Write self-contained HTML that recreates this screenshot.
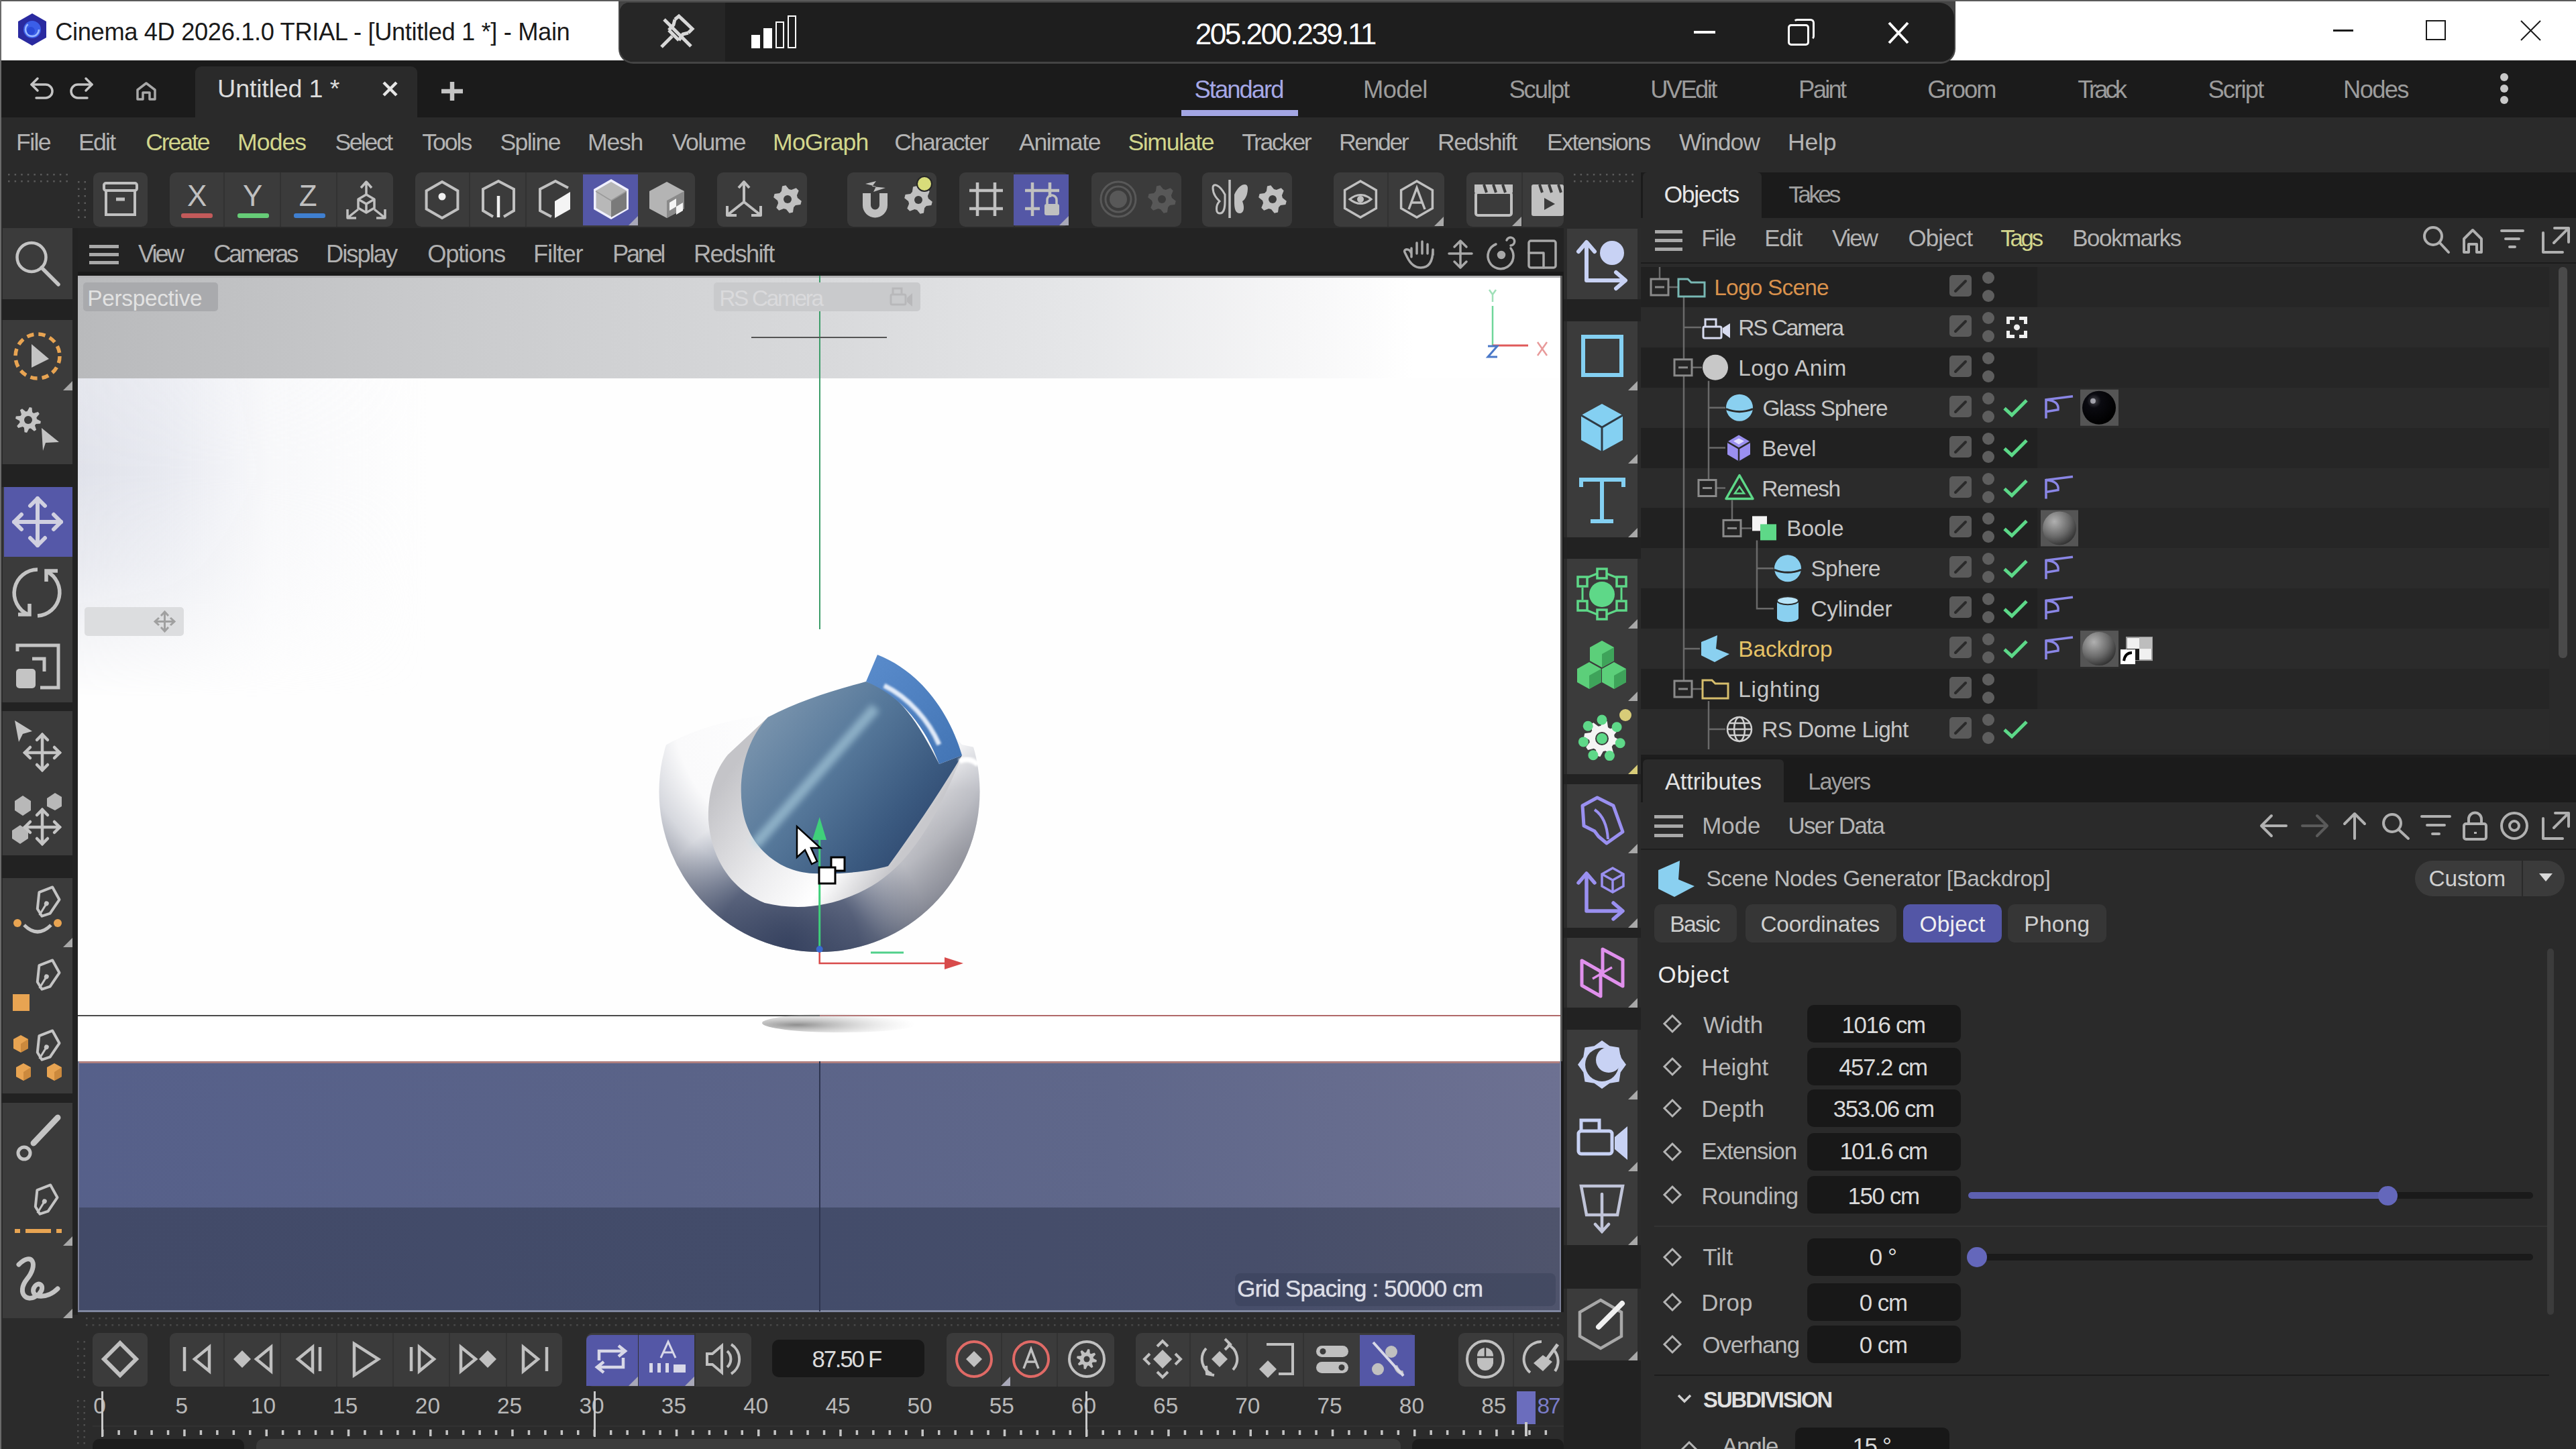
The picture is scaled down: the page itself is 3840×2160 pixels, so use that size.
<!DOCTYPE html><html><head><meta charset="utf-8"><style>
html,body{margin:0;padding:0;}
body{width:3840px;height:2160px;position:relative;overflow:hidden;background:#262626;font-family:"Liberation Sans",sans-serif;}
.t{position:absolute;white-space:nowrap;line-height:1;}
svg{overflow:visible}
</style></head><body>
<div style="position:absolute;left:0.0px;top:0.0px;width:3840.0px;height:90.0px;background:#ffffff;"></div>
<div style="position:absolute;left:0.0px;top:0.0px;width:3840.0px;height:2.0px;background:#5a5a5a;"></div>
<div style="position:absolute;left:0.0px;top:0.0px;width:2.0px;height:2160.0px;background:#6a6a6a;"></div>
<svg style="position:absolute;left:26.0px;top:19.0px;" width="44" height="50" viewBox="0 0 44 50"><polygon points="22,1 43,13 43,37 22,49 1,37 1,13" fill="#2a2aa0"/><circle cx="22" cy="25" r="13" fill="#3b5ee8"/><circle cx="22" cy="25" r="10" fill="none" stroke="#9bb8ff" stroke-width="2.5" stroke-dasharray="40 30"/><circle cx="20" cy="27" r="6" fill="#2a4ad8"/></svg>
<div class="t" style="left:82.2px;top:30px;font-size:36.34px;color:#1a1a1a;letter-spacing:-0.38px;">Cinema 4D 2026.1.0 TRIAL - [Untitled 1 *] - Main</div>
<div style="position:absolute;left:3478.0px;top:44.0px;width:30.0px;height:2.5px;background:#1a1a1a;"></div>
<div style="position:absolute;left:3616px;top:30px;width:26px;height:26px;border:2px solid #1a1a1a"></div>
<svg style="position:absolute;left:3757.0px;top:30.0px;" width="31" height="31" viewBox="0 0 31 31"><path d="M1 1 L30 30 M30 1 L1 30" stroke="#1a1a1a" stroke-width="2"/></svg>
<div style="position:absolute;left:922px;top:2px;width:1993px;height:93px;background:#444444;border-radius:0 0 22px 22px;z-index:5"></div>
<div style="position:absolute;left:924px;top:4px;width:1989px;height:88px;background:#1e1e1e;border-radius:14px 22px 20px 20px;overflow:hidden;z-index:5"><div style="position:absolute;left:0;top:0;width:157px;height:88px;background:#262626"></div></div>
<div style="position:absolute;left:0;top:0;width:0;height:0;z-index:6">
<svg style="position:absolute;left:984.0px;top:23.0px;" width="50" height="50" viewBox="0 0 50 50"><g fill="none" stroke="#d8d8d8" stroke-width="5"><path d="M22 6 L28 1 L48 20 L42 26 M13 22 L28 37 M2 47 L18 31 M6 6 L46 46"/><path d="M22 6 L20 14 L13 22 M42 26 L34 28 L28 37"/></g></svg>
<div style="position:absolute;left:1120.0px;top:52.0px;width:13.0px;height:20.0px;background:#ffffff;"></div>
<div style="position:absolute;left:1138.0px;top:42.0px;width:13.0px;height:30.0px;background:#ffffff;"></div>
<div style="position:absolute;left:1156px;top:32px;width:9px;height:36px;border:2px solid #fff"></div>
<div style="position:absolute;left:1174px;top:23px;width:9px;height:45px;border:2px solid #fff"></div>
<div class="t" style="left:1781.8px;top:29px;font-size:44.33px;color:#ffffff;letter-spacing:-2.64px;">205.200.239.11</div>
<div style="position:absolute;left:2525.0px;top:46.0px;width:32.0px;height:4.0px;background:#ffffff;"></div>
<div style="position:absolute;left:2673px;top:28px;width:26px;height:26px;border:3px solid #fff;border-radius:6px;border-left-color:transparent;border-bottom-color:transparent"></div>
<div style="position:absolute;left:2665px;top:36px;width:26px;height:26px;border:3px solid #fff;border-radius:5px;background:#1e1e1e"></div>
<svg style="position:absolute;left:2814.0px;top:32.0px;" width="32" height="34" viewBox="0 0 32 34"><path d="M2 2 L30 32 M30 2 L2 32" stroke="#fff" stroke-width="4"/></svg>
</div>
<div style="position:absolute;left:2.0px;top:90.0px;width:3838.0px;height:85.0px;background:#1b1b1b;"></div>
<svg style="position:absolute;left:44.0px;top:115.0px;" width="36" height="34" viewBox="0 0 36 34"><g fill="none" stroke="#c4c4c4" stroke-width="3.5" stroke-linecap="round" stroke-linejoin="round"><path d="M12 2 L3 11 L12 20"/><path d="M3 11 H24 A9.5 9.5 0 0 1 24 31 H10"/></g></svg>
<svg style="position:absolute;left:104.0px;top:115.0px;" width="36" height="34" viewBox="0 0 36 34"><g fill="none" stroke="#c4c4c4" stroke-width="3.5" stroke-linecap="round" stroke-linejoin="round"><path d="M24 2 L33 11 L24 20"/><path d="M33 11 H12 A9.5 9.5 0 0 0 12 31 H26"/></g></svg>
<svg style="position:absolute;left:203.0px;top:122.0px;" width="30" height="28" viewBox="0 0 30 28"><path d="M2 26 V12 L15 2 L28 12 V26 H20 V16 H10 V26 Z" fill="none" stroke="#a8a8a8" stroke-width="3.5" stroke-linejoin="round"/></svg>
<div style="position:absolute;left:291px;top:99px;width:331px;height:76px;background:#2a2a2a;border-radius:9px 9px 0 0"></div>
<div class="t" style="left:324.1px;top:114px;font-size:37.79px;color:#dcdcdc;letter-spacing:-0.23px;">Untitled 1 *</div>
<svg style="position:absolute;left:570.0px;top:121.0px;" width="23" height="23" viewBox="0 0 23 23"><path d="M2 2 L21 21 M21 2 L2 21" stroke="#e6e6e6" stroke-width="4.5"/></svg>
<svg style="position:absolute;left:658.0px;top:122.0px;" width="32" height="28" viewBox="0 0 32 28"><path d="M16 0 V28 M0 14 H32" stroke="#c4c4c4" stroke-width="6.5"/></svg>
<div class="t" style="left:1780.4px;top:116px;font-size:36.34px;color:#a6a8e6;letter-spacing:-1.91px;">Standard</div>
<div class="t" style="left:2032.1px;top:116px;font-size:36.34px;color:#9c9c9c;letter-spacing:-0.65px;">Model</div>
<div class="t" style="left:2249.4px;top:116px;font-size:36.34px;color:#9c9c9c;letter-spacing:-2.02px;">Sculpt</div>
<div class="t" style="left:2460.2px;top:116px;font-size:36.34px;color:#9c9c9c;letter-spacing:-2.60px;">UVEdit</div>
<div class="t" style="left:2681.1px;top:116px;font-size:36.34px;color:#9c9c9c;letter-spacing:-2.67px;">Paint</div>
<div class="t" style="left:2873.2px;top:116px;font-size:36.34px;color:#9c9c9c;letter-spacing:-1.95px;">Groom</div>
<div class="t" style="left:3097.2px;top:116px;font-size:36.34px;color:#9c9c9c;letter-spacing:-3.93px;">Track</div>
<div class="t" style="left:3291.4px;top:116px;font-size:36.34px;color:#9c9c9c;letter-spacing:-1.80px;">Script</div>
<div class="t" style="left:3493.1px;top:116px;font-size:36.34px;color:#9c9c9c;letter-spacing:-1.70px;">Nodes</div>
<div style="position:absolute;left:1761.0px;top:164.0px;width:174.0px;height:9.0px;background:#a3a6e3;"></div>
<div style="position:absolute;left:3727px;top:109px;width:12px;height:12px;border-radius:6px;background:#c8c8c8"></div>
<div style="position:absolute;left:3727px;top:126px;width:12px;height:12px;border-radius:6px;background:#c8c8c8"></div>
<div style="position:absolute;left:3727px;top:143px;width:12px;height:12px;border-radius:6px;background:#c8c8c8"></div>
<div style="position:absolute;left:2.0px;top:175.0px;width:3838.0px;height:68.0px;background:#2a2a2a;"></div>
<div class="t" style="left:24.1px;top:195px;font-size:35.61px;color:#b4b4b4;letter-spacing:-1.67px;">File</div>
<div class="t" style="left:117.1px;top:195px;font-size:35.61px;color:#b4b4b4;letter-spacing:-1.77px;">Edit</div>
<div class="t" style="left:217.2px;top:195px;font-size:35.61px;color:#d2d68c;letter-spacing:-2.12px;">Create</div>
<div class="t" style="left:354.1px;top:195px;font-size:35.61px;color:#d2d68c;letter-spacing:-0.95px;">Modes</div>
<div class="t" style="left:499.4px;top:195px;font-size:35.61px;color:#b4b4b4;letter-spacing:-2.44px;">Select</div>
<div class="t" style="left:629.2px;top:195px;font-size:35.61px;color:#b4b4b4;letter-spacing:-2.03px;">Tools</div>
<div class="t" style="left:745.4px;top:195px;font-size:35.61px;color:#b4b4b4;letter-spacing:-1.58px;">Spline</div>
<div class="t" style="left:876.1px;top:195px;font-size:35.61px;color:#b4b4b4;letter-spacing:-1.30px;">Mesh</div>
<div class="t" style="left:1001.9px;top:195px;font-size:35.61px;color:#b4b4b4;letter-spacing:-1.62px;">Volume</div>
<div class="t" style="left:1152.1px;top:195px;font-size:35.61px;color:#d2d68c;letter-spacing:-0.87px;">MoGraph</div>
<div class="t" style="left:1333.2px;top:195px;font-size:35.61px;color:#b4b4b4;letter-spacing:-1.86px;">Character</div>
<div class="t" style="left:1519.0px;top:195px;font-size:35.61px;color:#b4b4b4;letter-spacing:-1.35px;">Animate</div>
<div class="t" style="left:1681.4px;top:195px;font-size:35.61px;color:#d2d68c;letter-spacing:-1.34px;">Simulate</div>
<div class="t" style="left:1851.2px;top:195px;font-size:35.61px;color:#b4b4b4;letter-spacing:-2.50px;">Tracker</div>
<div class="t" style="left:1996.1px;top:195px;font-size:35.61px;color:#b4b4b4;letter-spacing:-2.46px;">Render</div>
<div class="t" style="left:2143.1px;top:195px;font-size:35.61px;color:#b4b4b4;letter-spacing:-1.64px;">Redshift</div>
<div class="t" style="left:2306.1px;top:195px;font-size:35.61px;color:#b4b4b4;letter-spacing:-2.11px;">Extensions</div>
<div class="t" style="left:2502.9px;top:195px;font-size:35.61px;color:#b4b4b4;letter-spacing:-1.12px;">Window</div>
<div class="t" style="left:2665.1px;top:195px;font-size:35.61px;color:#b4b4b4;letter-spacing:-0.30px;">Help</div>
<div style="position:absolute;left:2.0px;top:243.0px;width:2329.0px;height:97.0px;background:#2a2a2a;"></div>
<svg style="position:absolute;left:12.0px;top:259.0px;" width="96" height="14" viewBox="0 0 96 14"><rect x="0.0" y="0" width="2.5" height="2.5" fill="#5a5a5a"/><rect x="9.6" y="0" width="2.5" height="2.5" fill="#5a5a5a"/><rect x="19.2" y="0" width="2.5" height="2.5" fill="#5a5a5a"/><rect x="28.799999999999997" y="0" width="2.5" height="2.5" fill="#5a5a5a"/><rect x="38.4" y="0" width="2.5" height="2.5" fill="#5a5a5a"/><rect x="48.0" y="0" width="2.5" height="2.5" fill="#5a5a5a"/><rect x="57.599999999999994" y="0" width="2.5" height="2.5" fill="#5a5a5a"/><rect x="67.2" y="0" width="2.5" height="2.5" fill="#5a5a5a"/><rect x="76.8" y="0" width="2.5" height="2.5" fill="#5a5a5a"/><rect x="86.39999999999999" y="0" width="2.5" height="2.5" fill="#5a5a5a"/><rect x="0.0" y="10" width="2.5" height="2.5" fill="#5a5a5a"/><rect x="9.6" y="10" width="2.5" height="2.5" fill="#5a5a5a"/><rect x="19.2" y="10" width="2.5" height="2.5" fill="#5a5a5a"/><rect x="28.799999999999997" y="10" width="2.5" height="2.5" fill="#5a5a5a"/><rect x="38.4" y="10" width="2.5" height="2.5" fill="#5a5a5a"/><rect x="48.0" y="10" width="2.5" height="2.5" fill="#5a5a5a"/><rect x="57.599999999999994" y="10" width="2.5" height="2.5" fill="#5a5a5a"/><rect x="67.2" y="10" width="2.5" height="2.5" fill="#5a5a5a"/><rect x="76.8" y="10" width="2.5" height="2.5" fill="#5a5a5a"/><rect x="86.39999999999999" y="10" width="2.5" height="2.5" fill="#5a5a5a"/></svg>
<svg style="position:absolute;left:116.0px;top:270.0px;" width="14" height="60" viewBox="0 0 14 60"><rect x="0.0" y="0.0" width="2.5" height="2.5" fill="#5a5a5a"/><rect x="9.5" y="0.0" width="2.5" height="2.5" fill="#5a5a5a"/><rect x="0.0" y="10.5" width="2.5" height="2.5" fill="#5a5a5a"/><rect x="9.5" y="10.5" width="2.5" height="2.5" fill="#5a5a5a"/><rect x="0.0" y="21.0" width="2.5" height="2.5" fill="#5a5a5a"/><rect x="9.5" y="21.0" width="2.5" height="2.5" fill="#5a5a5a"/><rect x="0.0" y="31.5" width="2.5" height="2.5" fill="#5a5a5a"/><rect x="9.5" y="31.5" width="2.5" height="2.5" fill="#5a5a5a"/><rect x="0.0" y="42.0" width="2.5" height="2.5" fill="#5a5a5a"/><rect x="9.5" y="42.0" width="2.5" height="2.5" fill="#5a5a5a"/><rect x="0.0" y="52.5" width="2.5" height="2.5" fill="#5a5a5a"/><rect x="9.5" y="52.5" width="2.5" height="2.5" fill="#5a5a5a"/></svg>
<div style="position:absolute;left:139px;top:257px;width:81px;height:81px;background:#3b3b3b;border-radius:9px"></div>
<div style="position:absolute;left:253px;top:257px;width:333px;height:81px;background:#3b3b3b;border-radius:9px"></div>
<div style="position:absolute;left:619px;top:257px;width:417px;height:81px;background:#3b3b3b;border-radius:9px"></div>
<div style="position:absolute;left:1069px;top:257px;width:134px;height:81px;background:#3b3b3b;border-radius:9px"></div>
<div style="position:absolute;left:1263px;top:257px;width:133px;height:81px;background:#3b3b3b;border-radius:9px"></div>
<div style="position:absolute;left:1430px;top:257px;width:163px;height:81px;background:#3b3b3b;border-radius:9px"></div>
<div style="position:absolute;left:1627px;top:257px;width:134px;height:81px;background:#3b3b3b;border-radius:9px"></div>
<div style="position:absolute;left:1792px;top:257px;width:134px;height:81px;background:#3b3b3b;border-radius:9px"></div>
<div style="position:absolute;left:1988px;top:257px;width:165px;height:81px;background:#3b3b3b;border-radius:9px"></div>
<div style="position:absolute;left:2186px;top:257px;width:145px;height:81px;background:#3b3b3b;border-radius:9px"></div>
<div style="position:absolute;left:333.0px;top:257.0px;width:2.0px;height:81.0px;background:#323232;"></div>
<div style="position:absolute;left:417.0px;top:257.0px;width:2.0px;height:81.0px;background:#323232;"></div>
<div style="position:absolute;left:501.0px;top:257.0px;width:2.0px;height:81.0px;background:#323232;"></div>
<div style="position:absolute;left:699.0px;top:257.0px;width:2.0px;height:81.0px;background:#323232;"></div>
<div style="position:absolute;left:783.0px;top:257.0px;width:2.0px;height:81.0px;background:#323232;"></div>
<div style="position:absolute;left:1511.0px;top:257.0px;width:2.0px;height:81.0px;background:#323232;"></div>
<div style="position:absolute;left:2068.0px;top:257.0px;width:2.0px;height:81.0px;background:#323232;"></div>
<div style="position:absolute;left:2268.0px;top:257.0px;width:2.0px;height:81.0px;background:#323232;"></div>
<div style="position:absolute;left:869.0px;top:260.0px;width:82.0px;height:76.0px;background:#5457a6;"></div>
<svg style="position:absolute;left:937px;top:322px" width="14" height="14"><path d="M14 0 V14 H0 Z" fill="#a8a8b8"/></svg>
<div style="position:absolute;left:1511.0px;top:260.0px;width:82.0px;height:76.0px;background:#5457a6;"></div>
<svg style="position:absolute;left:1579px;top:322px" width="14" height="14"><path d="M14 0 V14 H0 Z" fill="#a8a8b8"/></svg>
<div style="position:absolute;left:2331px;top:243px;width:0px;height:0px"></div>
<svg style="position:absolute;left:0.0px;top:0.0px;" width="2331" height="340" viewBox="0 0 2331 340"><g fill="none" stroke="#c0c0c0" stroke-width="4"><rect x="155" y="273" width="49" height="11" rx="3"/><path d="M158 284 V320 H201 V284"/></g><path d="M173 297 H186" stroke="#c0c0c0" stroke-width="5"/><g stroke="#c0c0c0" stroke-width="3.5" fill="none" stroke-linejoin="round"><path d="M546 290 L558 297 V310 L546 317 L534 310 V297 Z M534 297 L546 304 L558 297 M546 304 V317"/><path d="M546 290 V272 M538 280 L546 271 L554 280"/><path d="M534 312 L519 324 M518 312 V325 H531 M558 312 L573 324 M574 312 V325 H561"/></g><polygon points="659.0,271.0 682.4,284.5 682.4,311.5 659.0,325.0 635.6,311.5 635.6,284.5" fill="none" stroke="#c0c0c0" stroke-width="4"/><circle cx="659" cy="293" r="5.5" fill="#f0f0f0"/><path d="M735 323 L720 314 V282 L743 270 L766 282 V314 L751 323" fill="none" stroke="#c0c0c0" stroke-width="4"/><path d="M743 292 V324" stroke="#f0f0f0" stroke-width="4.5"/><path d="M822 323 L805 314 V282 L828 270 L847 280" fill="none" stroke="#c0c0c0" stroke-width="4"/><path d="M827 300 L850 286 V312 L827 325 Z" fill="#f4f4f4"/><polygon points="911.0,269.0 935.2,283.0 935.2,311.0 911.0,325.0 886.8,311.0 886.8,283.0" fill="#b8b8b8" stroke="#f0f0ff" stroke-width="3.5"/><path d="M911 299 L934 285 V311 L911 324 Z" fill="#7a7a7a"/><path d="M888 285 L911 299 L934 285" stroke="#9a9a9a" stroke-width="1.5" fill="none"/><path d="M994 271 L1020 285 V311 L994 325 L968 311 V285 Z" fill="#b4b4b4"/><path d="M994 299 L1020 285 V311 L994 325 Z" fill="#8a8a8a"/><path d="M998 302 L1008 296 V308 L998 314 Z M1008 308 L1018 302 V314 L1008 320 Z" fill="#f4f4f4"/><g stroke="#c0c0c0" stroke-width="4" fill="none" stroke-linejoin="round"><path d="M1109 301 V272 M1101 280 L1109 271 L1117 280 M1109 301 L1085 320 M1084 307 V321 H1098 M1109 301 L1133 320 M1134 307 V321 H1120"/></g><path d="M1194.8 299.7 L1193.4 305.0 L1185.9 306.1 L1183.1 308.9 L1182.0 316.4 L1176.7 317.8 L1172.0 311.9 L1168.3 310.9 L1161.2 313.7 L1157.3 309.8 L1160.1 302.7 L1159.1 299.0 L1153.2 294.3 L1154.6 289.0 L1162.1 287.9 L1164.9 285.1 L1166.0 277.6 L1171.3 276.2 L1176.0 282.1 L1179.7 283.1 L1186.8 280.3 L1190.7 284.2 L1187.9 291.3 L1188.9 295.0 Z" fill="#c0c0c0"/><circle cx="1174" cy="297" r="6" fill="#3b3b3b"/><path d="M1286 288 V306 A18.5 18.5 0 0 0 1323 306 V288 H1311 V306 A6.5 6.5 0 0 1 1298 306 V288 Z" fill="#c0c0c0"/><path d="M1290 274 L1306 270 L1300 278 L1320 280 L1302 286 L1306 278 Z" fill="#c0c0c0"/><path d="M1389.8 300.7 L1388.4 306.0 L1380.9 307.1 L1378.1 309.9 L1377.0 317.4 L1371.7 318.8 L1367.0 312.9 L1363.3 311.9 L1356.2 314.7 L1352.3 310.8 L1355.1 303.7 L1354.1 300.0 L1348.2 295.3 L1349.6 290.0 L1357.1 288.9 L1359.9 286.1 L1361.0 278.6 L1366.3 277.2 L1371.0 283.1 L1374.7 284.1 L1381.8 281.3 L1385.7 285.2 L1382.9 292.3 L1383.9 296.0 Z" fill="#c0c0c0"/><circle cx="1369" cy="298" r="6" fill="#3b3b3b"/><circle cx="1378" cy="274" r="11" fill="#d8dc7a" stroke="#262626" stroke-width="2"/><path d="M1457 272 V322 M1483 272 V322 M1445 284 H1495 M1445 311 H1495" stroke="#c0c0c0" stroke-width="4.5"/><path d="M1539 272 V322 M1565 272 V294 M1528 284 H1579 M1528 311 H1550" stroke="#c0c0c0" stroke-width="4.5"/><rect x="1557" y="304" width="22" height="17" rx="3" fill="#c0c0c0"/><path d="M1561 304 V298 A7 7 0 0 1 1575 298 V304" stroke="#c0c0c0" stroke-width="3.5" fill="none"/><circle cx="1667" cy="297" r="26" fill="none" stroke="#585858" stroke-width="3"/><circle cx="1667" cy="297" r="19" fill="none" stroke="#585858" stroke-width="3"/><circle cx="1667" cy="297" r="13" fill="#585858"/><path d="M1752.8 299.7 L1751.4 305.0 L1743.9 306.1 L1741.1 308.9 L1740.0 316.4 L1734.7 317.8 L1730.0 311.9 L1726.3 310.9 L1719.2 313.7 L1715.3 309.8 L1718.1 302.7 L1717.1 299.0 L1711.2 294.3 L1712.6 289.0 L1720.1 287.9 L1722.9 285.1 L1724.0 277.6 L1729.3 276.2 L1734.0 282.1 L1737.7 283.1 L1744.8 280.3 L1748.7 284.2 L1745.9 291.3 L1746.9 295.0 Z" fill="#585858"/><circle cx="1732" cy="297" r="6" fill="#3b3b3b"/><path d="M1833 268 V325" stroke="#c0c0c0" stroke-width="3.5"/><path d="M1826 290 C1818 275 1808 272 1808 280 C1808 290 1814 296 1818 300 C1812 306 1812 318 1818 318 C1826 318 1826 306 1826 300 Z" fill="none" stroke="#c0c0c0" stroke-width="3"/><path d="M1840 290 C1848 272 1860 272 1860 280 C1860 296 1852 300 1852 300 C1856 310 1854 318 1848 318 C1840 318 1840 306 1840 300 Z" fill="#c0c0c0"/><path d="M1917.8 299.7 L1916.4 305.0 L1908.9 306.1 L1906.1 308.9 L1905.0 316.4 L1899.7 317.8 L1895.0 311.9 L1891.3 310.9 L1884.2 313.7 L1880.3 309.8 L1883.1 302.7 L1882.1 299.0 L1876.2 294.3 L1877.6 289.0 L1885.1 287.9 L1887.9 285.1 L1889.0 277.6 L1894.3 276.2 L1899.0 282.1 L1902.7 283.1 L1909.8 280.3 L1913.7 284.2 L1910.9 291.3 L1911.9 295.0 Z" fill="#c0c0c0"/><circle cx="1897" cy="297" r="6" fill="#3b3b3b"/><polygon points="2028.0,270.0 2051.4,283.5 2051.4,310.5 2028.0,324.0 2004.6,310.5 2004.6,283.5" fill="none" stroke="#c0c0c0" stroke-width="3.5"/><path d="M2012 297 Q2028 284 2044 297 Q2028 310 2012 297 Z" fill="none" stroke="#c0c0c0" stroke-width="3"/><circle cx="2028" cy="297" r="5" fill="#c0c0c0"/><polygon points="2112.0,270.0 2135.4,283.5 2135.4,310.5 2112.0,324.0 2088.6,310.5 2088.6,283.5" fill="none" stroke="#c0c0c0" stroke-width="3.5"/><path d="M2100 312 L2112 280 L2124 312 M2104 302 H2120" stroke="#c0c0c0" stroke-width="3.5" fill="none"/><rect x="2200" y="287" width="53" height="34" rx="3" fill="none" stroke="#c0c0c0" stroke-width="4"/><path d="M2198 275 H2255 V287 H2198 Z" fill="#c0c0c0"/><path d="M2212 275 L2216 287 M2226 275 L2230 287 M2240 275 L2244 287" stroke="#3b3b3b" stroke-width="4"/><rect x="2283" y="275" width="48" height="47" rx="3" fill="#c0c0c0"/><path d="M2295 275 L2299 287 M2309 275 L2313 287 M2323 275 L2327 287" stroke="#3b3b3b" stroke-width="4"/><path d="M2302 295 L2318 304 L2302 313 Z" fill="#3b3b3b"/></svg>
<div class="t" style="left:279.1px;top:270px;font-size:44.00px;color:#c0c0c0;letter-spacing:0.00px;">X</div>
<div class="t" style="left:362.1px;top:270px;font-size:44.00px;color:#c0c0c0;letter-spacing:0.00px;">Y</div>
<div class="t" style="left:445.7px;top:270px;font-size:44.00px;color:#c0c0c0;letter-spacing:0.00px;">Z</div>
<div style="position:absolute;left:270.0px;top:318.0px;width:47.0px;height:7.0px;background:#c25a5a;border-radius:3px"></div>
<div style="position:absolute;left:354.0px;top:318.0px;width:47.0px;height:7.0px;background:#66cc77;border-radius:3px"></div>
<div style="position:absolute;left:438.0px;top:318.0px;width:47.0px;height:7.0px;background:#3f7fd0;border-radius:3px"></div>
<svg style="position:absolute;left:2138.0px;top:323.0px;" width="14" height="14" viewBox="0 0 14 14"><path d="M14 0 V14 H0 Z" fill="#a8a8a8"/></svg>
<svg style="position:absolute;left:2254.0px;top:323.0px;" width="14" height="14" viewBox="0 0 14 14"><path d="M14 0 V14 H0 Z" fill="#a8a8a8"/></svg>
<div style="position:absolute;left:2.0px;top:340.0px;width:114.0px;height:1820.0px;background:#2b2b2b;"></div>
<div style="position:absolute;left:108.0px;top:340.0px;width:8.0px;height:1620.0px;background:#222222;"></div>
<div style="position:absolute;left:2.0px;top:446.0px;width:106.0px;height:31.0px;background:#222222;"></div>
<div style="position:absolute;left:2.0px;top:692.0px;width:106.0px;height:34.0px;background:#222222;"></div>
<div style="position:absolute;left:2.0px;top:1047.0px;width:106.0px;height:13.0px;background:#222222;"></div>
<div style="position:absolute;left:2.0px;top:1275.0px;width:106.0px;height:34.0px;background:#222222;"></div>
<div style="position:absolute;left:2.0px;top:1630.0px;width:106.0px;height:14.0px;background:#222222;"></div>
<div style="position:absolute;left:4px;top:340px;width:104px;height:106px;background:#3b3b3b"></div>
<div style="position:absolute;left:4px;top:477px;width:104px;height:107px;background:#3b3b3b"></div>
<div style="position:absolute;left:4px;top:584px;width:104px;height:108px;background:#3b3b3b"></div>
<div style="position:absolute;left:4px;top:726px;width:104px;height:104px;background:#3b3b3b"></div>
<div style="position:absolute;left:4px;top:830px;width:104px;height:109px;background:#3b3b3b"></div>
<div style="position:absolute;left:4px;top:939px;width:104px;height:108px;background:#3b3b3b"></div>
<div style="position:absolute;left:4px;top:1060px;width:104px;height:104px;background:#3b3b3b"></div>
<div style="position:absolute;left:4px;top:1164px;width:104px;height:111px;background:#3b3b3b"></div>
<div style="position:absolute;left:4px;top:1309px;width:104px;height:103px;background:#3b3b3b"></div>
<div style="position:absolute;left:4px;top:1412px;width:104px;height:107px;background:#3b3b3b"></div>
<div style="position:absolute;left:4px;top:1519px;width:104px;height:111px;background:#3b3b3b"></div>
<div style="position:absolute;left:4px;top:1644px;width:104px;height:105px;background:#3b3b3b"></div>
<div style="position:absolute;left:4px;top:1749px;width:104px;height:108px;background:#3b3b3b"></div>
<div style="position:absolute;left:4px;top:1857px;width:104px;height:108px;background:#3b3b3b"></div>
<div style="position:absolute;left:6.0px;top:726.0px;width:102.0px;height:104.0px;background:#5558a8;"></div>
<svg style="position:absolute;left:0.0px;top:340.0px;" width="116" height="106" viewBox="0 0 116 106"><circle cx="47" cy="43.5" r="21.5" fill="none" stroke="#c4c4c4" stroke-width="4.5"/><path d="M62 59 L87 84" stroke="#c4c4c4" stroke-width="5.5" stroke-linecap="round"/></svg>
<svg style="position:absolute;left:0.0px;top:478.0px;" width="116" height="104" viewBox="0 0 116 104"><circle cx="56" cy="53" r="33" fill="none" stroke="#e8a452" stroke-width="5.5" stroke-dasharray="10.4 7"/><path d="M47 35 L73 57 L47 70 Z" fill="#c4c4c4"/></svg>
<svg style="position:absolute;left:94.0px;top:568.0px;" width="14" height="14" viewBox="0 0 14 14"><path d="M14 0 V14 H0 Z" fill="#a8a8a8"/></svg>
<svg style="position:absolute;left:0.0px;top:582.0px;" width="116" height="110" viewBox="0 0 116 110"><path d="M60.9 45.9 L60.2 49.5 L53.5 50.1 L52.0 52.2 L54.1 58.7 L51.0 60.8 L45.8 56.4 L43.3 56.9 L40.1 62.9 L36.5 62.2 L35.9 55.5 L33.8 54.0 L27.3 56.1 L25.2 53.0 L29.6 47.8 L29.1 45.3 L23.1 42.1 L23.8 38.5 L30.5 37.9 L32.0 35.8 L29.9 29.3 L33.0 27.2 L38.2 31.6 L40.7 31.1 L43.9 25.1 L47.5 25.8 L48.1 32.5 L50.2 34.0 L56.7 31.9 L58.8 35.0 L54.4 40.2 L54.9 42.7 Z" fill="#c4c4c4"/><circle cx="42" cy="44" r="6" fill="#3b3b3b"/><path d="M62 56 L88 77 L68 78 L64 90 Z" fill="#c4c4c4"/></svg>
<svg style="position:absolute;left:0.0px;top:726.0px;" width="116" height="104" viewBox="0 0 116 104"><g stroke="#d0d0e0" stroke-width="6" fill="none" stroke-linecap="round" stroke-linejoin="round"><path d="M56 17 V87 M21 52 H91"/><path d="M45 28 L56 17 L67 28 M45 76 L56 87 L67 76 M32 41 L21 52 L32 63 M80 41 L91 52 L80 63"/></g></svg>
<svg style="position:absolute;left:0.0px;top:830.0px;" width="116" height="109" viewBox="0 0 116 109"><g stroke="#c4c4c4" stroke-width="5.5" fill="none"><path d="M56 19 A35 35 0 0 0 42 86"/><path d="M56 88 A35 35 0 0 0 70 22"/><path d="M27 86 H44 V70" /><path d="M86 21 H69 V37"/></g></svg>
<svg style="position:absolute;left:0.0px;top:939.0px;" width="116" height="108" viewBox="0 0 116 108"><g stroke="#c4c4c4" stroke-width="5" fill="none"><path d="M26 32 V23 H87 V86 H60"/><path d="M48 43 H66 V62"/></g><rect x="24" y="58" width="29" height="29" rx="5" fill="#c4c4c4"/></svg>
<svg style="position:absolute;left:0.0px;top:1060.0px;" width="116" height="104" viewBox="0 0 116 104"><path d="M22 14 L48 30 L34 34 L28 46 Z" fill="#c4c4c4"/><g stroke="#c4c4c4" stroke-width="4.5" fill="none" stroke-linecap="round"><path d="M63 35 V88 M37 62 H89"/><path d="M55 43 L63 35 L71 43 M55 80 L63 88 L71 80 M45 54 L37 62 L45 70 M81 54 L89 62 L81 70"/></g></svg>
<svg style="position:absolute;left:0.0px;top:1164.0px;" width="116" height="111" viewBox="0 0 116 111"><g fill="#b8b8b8"><path d="M22 30 L34 22 L46 30 L46 44 L34 52 L22 44 Z"/><path d="M70 26 L82 18 L92 24 L92 38 L82 44 L70 38 Z"/><path d="M18 74 L30 66 L42 74 L42 86 L30 94 L18 86 Z"/></g><g stroke="#c4c4c4" stroke-width="4.5" fill="none" stroke-linecap="round"><path d="M63 43 V94 M37 69 H89"/><path d="M55 51 L63 43 L71 51 M55 86 L63 94 L71 86 M45 61 L37 69 L45 77 M81 61 L89 69 L81 77"/></g></svg>
<svg style="position:absolute;left:0.0px;top:1309.0px;" width="116" height="103" viewBox="0 0 116 103"><g transform="translate(70,36) rotate(20)"><path d="M-16 -10 L0 -24 L16 -10 L10 14 L0 22 L-10 14 Z" fill="none" stroke="#c4c4c4" stroke-width="4" stroke-linejoin="round"/><circle cx="0" cy="2" r="3.5" fill="#c4c4c4"/><path d="M0 2 L-4 22" stroke="#c4c4c4" stroke-width="3"/></g><circle cx="26" cy="67" r="6" fill="#e8a452"/><circle cx="86" cy="67" r="6" fill="#e8a452"/><path d="M36 70 Q56 90 76 70" stroke="#c4c4c4" stroke-width="5" fill="none"/></svg>
<svg style="position:absolute;left:94.0px;top:1398.0px;" width="14" height="14" viewBox="0 0 14 14"><path d="M14 0 V14 H0 Z" fill="#a8a8a8"/></svg>
<svg style="position:absolute;left:0.0px;top:1412.0px;" width="116" height="107" viewBox="0 0 116 107"><g transform="translate(70,42) rotate(20)"><path d="M-16 -10 L0 -24 L16 -10 L10 14 L0 22 L-10 14 Z" fill="none" stroke="#c4c4c4" stroke-width="4" stroke-linejoin="round"/><circle cx="0" cy="2" r="3.5" fill="#c4c4c4"/><path d="M0 2 L-4 22" stroke="#c4c4c4" stroke-width="3"/></g><rect x="19" y="70" width="25" height="25" fill="#e8a452"/></svg>
<svg style="position:absolute;left:0.0px;top:1519.0px;" width="116" height="111" viewBox="0 0 116 111"><g transform="translate(70,40) rotate(20)"><path d="M-16 -10 L0 -24 L16 -10 L10 14 L0 22 L-10 14 Z" fill="none" stroke="#c4c4c4" stroke-width="4" stroke-linejoin="round"/><circle cx="0" cy="2" r="3.5" fill="#c4c4c4"/><path d="M0 2 L-4 22" stroke="#c4c4c4" stroke-width="3"/></g><g fill="#e8a452"><path d="M20 30 L31 24 L42 30 L42 44 L31 50 L20 44 Z"/><path d="M24 72 L35 66 L46 72 L46 86 L35 92 L24 86 Z"/><path d="M70 72 L81 66 L92 72 L92 86 L81 92 L70 86 Z"/></g><g fill="#b87830" opacity="0.6"><path d="M31 37 L42 30 L42 44 L31 50 Z"/><path d="M35 79 L46 72 L46 86 L35 92 Z"/><path d="M81 79 L92 72 L92 86 L81 92 Z"/></g></svg>
<svg style="position:absolute;left:0.0px;top:1644.0px;" width="116" height="105" viewBox="0 0 116 105"><path d="M86 22 L50 60" stroke="#c4c4c4" stroke-width="9" stroke-linecap="round"/><circle cx="36" cy="75" r="9" fill="none" stroke="#c4c4c4" stroke-width="5"/></svg>
<svg style="position:absolute;left:0.0px;top:1749.0px;" width="116" height="108" viewBox="0 0 116 108"><g transform="translate(67,40) rotate(20)"><path d="M-16 -10 L0 -24 L16 -10 L10 14 L0 22 L-10 14 Z" fill="none" stroke="#c4c4c4" stroke-width="4" stroke-linejoin="round"/><circle cx="0" cy="2" r="3.5" fill="#c4c4c4"/><path d="M0 2 L-4 22" stroke="#c4c4c4" stroke-width="3"/></g><path d="M22 86 H30 M38 86 H76 M84 86 H92" stroke="#e8a452" stroke-width="6"/></svg>
<svg style="position:absolute;left:94.0px;top:1843.0px;" width="14" height="14" viewBox="0 0 14 14"><path d="M14 0 V14 H0 Z" fill="#a8a8a8"/></svg>
<svg style="position:absolute;left:0.0px;top:1857.0px;" width="116" height="108" viewBox="0 0 116 108"><path d="M28 28 C48 8 58 28 40 50 C24 70 40 88 58 72 C70 60 56 50 50 64 C46 78 70 80 86 64" stroke="#c4c4c4" stroke-width="7" fill="none" stroke-linecap="round"/></svg>
<svg style="position:absolute;left:94.0px;top:1951.0px;" width="14" height="14" viewBox="0 0 14 14"><path d="M14 0 V14 H0 Z" fill="#a8a8a8"/></svg>
<div style="position:absolute;left:116.0px;top:340.0px;width:2215.0px;height:71.0px;background:#232323;"></div>
<div style="position:absolute;left:133.0px;top:365.0px;width:44.0px;height:5.0px;background:#a8a8a8;"></div>
<div style="position:absolute;left:133.0px;top:377.0px;width:44.0px;height:5.0px;background:#a8a8a8;"></div>
<div style="position:absolute;left:133.0px;top:389.0px;width:44.0px;height:5.0px;background:#a8a8a8;"></div>
<div class="t" style="left:205.9px;top:361px;font-size:36.34px;color:#b0b0b0;letter-spacing:-3.00px;">View</div>
<div class="t" style="left:318.2px;top:361px;font-size:36.34px;color:#b0b0b0;letter-spacing:-3.37px;">Cameras</div>
<div class="t" style="left:486.1px;top:361px;font-size:36.34px;color:#b0b0b0;letter-spacing:-2.02px;">Display</div>
<div class="t" style="left:637.3px;top:361px;font-size:36.34px;color:#b0b0b0;letter-spacing:-1.37px;">Options</div>
<div class="t" style="left:795.1px;top:361px;font-size:36.34px;color:#b0b0b0;letter-spacing:-1.24px;">Filter</div>
<div class="t" style="left:913.1px;top:361px;font-size:36.34px;color:#b0b0b0;letter-spacing:-3.40px;">Panel</div>
<div class="t" style="left:1034.1px;top:361px;font-size:36.34px;color:#b0b0b0;letter-spacing:-1.73px;">Redshift</div>
<svg style="position:absolute;left:0.0px;top:0.0px;" width="2331" height="420" viewBox="0 0 2331 420"><g stroke="#a8a8a8" stroke-width="3.5" fill="none" stroke-linecap="round" stroke-linejoin="round"><path d="M2104 383 V370 M2112 378 V362 M2120 378 V360 M2128 378 V364 M2136 380 V372 C2136 390 2130 399 2118 399 C2108 399 2102 392 2098 384 L2094 376 C2092 372 2098 370 2102 374 L2104 378"/><path d="M2177 360 V398 M2168 368 L2177 359 L2186 368 M2168 390 L2177 399 L2186 390 M2160 378 H2194"/><path d="M2230 364 A19 19 0 1 0 2252 370"/><circle cx="2238" cy="380" r="4.5" fill="#a8a8a8"/><path d="M2246 358 A6 6 0 1 1 2252 366"/><rect x="2279" y="359" width="40" height="40" rx="3"/><path d="M2279 377 H2301 V399"/></g></svg>
<div style="position:absolute;left:116.0px;top:405.0px;width:2215.0px;height:1557.0px;background:#1a1a1a;"></div>
<div style="position:absolute;left:116px;top:411px;width:2211px;height:153px;background:linear-gradient(90deg,#b9babc 0%,#cacbcd 25%,#d8d9db 50%,#e6e7e9 68%,#f6f6f7 82%,#ffffff 90%)"></div>
<div style="position:absolute;left:116.0px;top:411.0px;width:2211.0px;height:3.0px;background:#b4b4b6;"></div>
<div style="position:absolute;left:116px;top:564px;width:2211px;height:950px;background:#fefefe"></div>
<div style="position:absolute;left:116.0px;top:1513.0px;width:1106.0px;height:2.0px;background:#4a4a4a;"></div>
<div style="position:absolute;left:1222.0px;top:1513.0px;width:1105.0px;height:2.0px;background:#b06868;"></div>
<div style="position:absolute;left:116.0px;top:1515.0px;width:2211.0px;height:68.0px;background:#ffffff;"></div>
<div style="position:absolute;left:116.0px;top:1582.0px;width:2211.0px;height:3.0px;background:#b08080;"></div>
<div style="position:absolute;left:116px;top:1585px;width:2211px;height:215px;background:linear-gradient(90deg,#56608a 0%,#5a6388 40%,#5f678a 70%,#6d7192 100%)"></div>
<div style="position:absolute;left:116px;top:1800px;width:2211px;height:155px;background:linear-gradient(90deg,#424a68 0%,#434c6a 50%,#474e6a 80%,#4f546c 100%)"></div>
<div style="position:absolute;left:116.0px;top:1953.0px;width:2211.0px;height:3.0px;background:#8088a0;"></div>
<div style="position:absolute;left:2325.0px;top:1582.0px;width:2.0px;height:372.0px;background:#7a7e96;"></div>
<div style="position:absolute;left:116.0px;top:1582.0px;width:2.0px;height:372.0px;background:#7a7e96;"></div>
<div style="position:absolute;left:2326.0px;top:411.0px;width:3.0px;height:1171.0px;background:#5a5a5a;"></div>
<div style="position:absolute;left:1221.0px;top:411.0px;width:2.0px;height:527.0px;background:#3e9e6a;"></div>
<div style="position:absolute;left:1221.0px;top:1582.0px;width:2.0px;height:373.0px;background:#2e3550;"></div>
<div style="position:absolute;left:1120.0px;top:502.0px;width:202.0px;height:2.0px;background:#555555;"></div>
<div style="position:absolute;left:124px;top:421px;width:201px;height:43px;background:#a9aaad;border-radius:5px"></div>
<div class="t" style="left:130.3px;top:428px;font-size:33.43px;color:#e2e2e2;letter-spacing:-0.33px;">Perspective</div>
<div style="position:absolute;left:1064px;top:421px;width:308px;height:43px;background:#c9cacc;border-radius:5px"></div>
<div class="t" style="left:1072.3px;top:428px;font-size:33.43px;color:#dadadc;letter-spacing:-2.35px;">RS Camera</div>
<svg style="position:absolute;left:1326.0px;top:427.0px;" width="36" height="30" viewBox="0 0 36 30"><g stroke="#b8b8ba" stroke-width="3" fill="none"><rect x="2" y="12" width="22" height="15" rx="2"/><path d="M5 12 V3 H18 V12"/></g><path d="M34 10 V30 L26 23 V17 Z" fill="#b8b8ba"/></svg>
<svg style="position:absolute;left:2212.0px;top:440.0px;" width="110" height="100" viewBox="0 0 110 100"><path d="M13 16 V75" stroke="#6fd69a" stroke-width="2.5"/><path d="M13 75 H66" stroke="#e05a5a" stroke-width="3"/><path d="M8 -8 L13 -1 L18 -8 M13 -1 V10" stroke="#9fe0b8" stroke-width="2.5" fill="none"/><path d="M80 70 L94 90 M94 70 L80 90" stroke="#e89a9a" stroke-width="2.5"/><path d="M6 76 H20 L6 92 H20" stroke="#4a78c8" stroke-width="3" fill="none"/></svg>
<div style="position:absolute;left:1841px;top:1898px;width:478px;height:49px;background:rgba(50,56,80,0.35);border-radius:8px"></div>
<div class="t" style="left:1844.3px;top:1904px;font-size:34.88px;color:#dcdee6;letter-spacing:-0.78px;text-shadow:0 0 1px #dcdee6;">Grid Spacing : 50000 cm</div>
<div style="position:absolute;left:116px;top:564px;width:520px;height:560px;background:linear-gradient(90deg,rgba(224,226,234,1) 0%,rgba(228,230,238,0.85) 25%,rgba(240,241,246,0.45) 55%,rgba(255,255,255,0) 100%);-webkit-mask-image:linear-gradient(180deg,rgba(0,0,0,0.85) 0%,rgba(0,0,0,1) 25%,rgba(0,0,0,0.7) 50%,rgba(0,0,0,0) 85%)"></div>
<div style="position:absolute;left:126px;top:905px;width:148px;height:43px;background:#dcdddf;border-radius:5px"></div>
<svg style="position:absolute;left:229.0px;top:910.0px;" width="33" height="33" viewBox="0 0 33 33"><g stroke="#a0a0a0" stroke-width="3" fill="none"><path d="M16.5 3 V30 M3 16.5 H30"/><path d="M11 8 L16.5 2 L22 8 M11 25 L16.5 31 L22 25 M8 11 L2 16.5 L8 22 M25 11 L31 16.5 L25 22"/></g></svg>
<svg style="position:absolute;left:960.0px;top:960.0px;" width="520" height="480" viewBox="0 0 520 480">
<defs>
 <radialGradient id="shell" gradientUnits="userSpaceOnUse" cx="255" cy="95" r="365">
  <stop offset="0" stop-color="#ffffff"/>
  <stop offset="0.58" stop-color="#fafafb"/>
  <stop offset="0.74" stop-color="#d6d8de"/>
  <stop offset="0.88" stop-color="#9a9eaa"/>
  <stop offset="1" stop-color="#686e7e"/>
 </radialGradient>
 <radialGradient id="dark" gradientUnits="userSpaceOnUse" cx="215" cy="450" r="210">
  <stop offset="0" stop-color="#34405e" stop-opacity="0.95"/>
  <stop offset="0.5" stop-color="#3c4866" stop-opacity="0.75"/>
  <stop offset="1" stop-color="#5a6680" stop-opacity="0"/>
 </radialGradient>
 <radialGradient id="rgray" gradientUnits="userSpaceOnUse" cx="470" cy="320" r="170">
  <stop offset="0" stop-color="#8a8a90" stop-opacity="0.55"/>
  <stop offset="0.6" stop-color="#909098" stop-opacity="0.35"/>
  <stop offset="1" stop-color="#a0a0a8" stop-opacity="0"/>
 </radialGradient>
 <clipPath id="shclip"><path d="M0 172 Q70 118 185 106 L331 56 L348 10 L474 150 L520 160 L520 480 L0 480 Z"/></clipPath>
 <linearGradient id="silver" gradientUnits="userSpaceOnUse" x1="100" y1="230" x2="330" y2="390">
  <stop offset="0" stop-color="#c4c4c8"/>
  <stop offset="0.45" stop-color="#ececee"/>
  <stop offset="0.75" stop-color="#ffffff"/>
  <stop offset="1" stop-color="#c8c8cc"/>
 </linearGradient>
 <linearGradient id="blue" gradientUnits="userSpaceOnUse" x1="160" y1="120" x2="420" y2="330">
  <stop offset="0" stop-color="#7b95ae"/>
  <stop offset="0.4" stop-color="#56789a"/>
  <stop offset="0.75" stop-color="#3b5a80"/>
  <stop offset="1" stop-color="#2c456c"/>
 </linearGradient>
 <linearGradient id="rim" x1="0" y1="0" x2="1" y2="1">
  <stop offset="0" stop-color="#5a8ccc"/>
  <stop offset="1" stop-color="#4274b4"/>
 </linearGradient>
 <radialGradient id="shadow" cx="0.22" cy="0.6" r="0.75">
  <stop offset="0" stop-color="#7a7a7a" stop-opacity="0.85"/>
  <stop offset="1" stop-color="#d0d0d0" stop-opacity="0"/>
 </radialGradient>
 <filter id="blur4" x="-50%" y="-50%" width="200%" height="200%"><feGaussianBlur stdDeviation="5"/></filter>
 <filter id="blur2" x="-50%" y="-50%" width="200%" height="200%"><feGaussianBlur stdDeviation="1.5"/></filter>
</defs>
<ellipse cx="294" cy="565" rx="118" ry="14" fill="url(#shadow)"/>
<g clip-path="url(#shclip)"><circle cx="261.5" cy="220" r="239" fill="url(#shell)"/><circle cx="261.5" cy="220" r="239" fill="url(#dark)"/><circle cx="261.5" cy="220" r="239" fill="url(#rgray)"/></g>
<path d="M474 166 C440 250 400 330 330 366 C280 392 230 398 180 386 C130 366 100 320 96 262 C95 222 105 190 125 165 L185 109 L331 56 Z" fill="url(#silver)"/>
<path d="M185 109 C155 140 140 190 146 240 C152 300 200 340 252 342 C300 344 340 338 364 331 C405 275 445 215 474 166 L440 179 C410 120 380 70 331 56 C280 70 230 85 185 109 Z" fill="url(#blue)"/>
<path d="M165 300 L345 95" stroke="#b8dcea" stroke-width="16" opacity="0.55" filter="url(#blur4)"/>
<path d="M348 16 C410 40 455 100 474 166 L440 179 C420 125 385 78 331 56 Z" fill="url(#rim)"/>
<path d="M358 62 C395 80 425 115 440 150" stroke="#f0f6ff" stroke-width="7" fill="none" opacity="0.9" filter="url(#blur2)"/>
<path d="M470 175 C480 170 490 172 498 180" stroke="#ffffff" stroke-width="8" fill="none" filter="url(#blur2)"/>
<path d="M261.7 290 V455" stroke="#3fd07a" stroke-width="3"/>
<path d="M251 292 L261.7 258 L272 292 Z" fill="#3fd07a"/>
<path d="M261.7 455 V476 H452" stroke="#d84a4a" stroke-width="2.5" fill="none"/>
<path d="M448 467 L476 476 L448 485 Z" fill="#d84a4a"/>
<path d="M338 460 H387" stroke="#50d08a" stroke-width="3"/>
<circle cx="261.7" cy="455" r="5" fill="#3a6ad0"/>
<path d="M228 272 V318 L240 307 L250 328 L258 324 L249 304 L263 304 Z" fill="#ffffff" stroke="#000" stroke-width="2.5"/>
<rect x="279" y="318" width="20" height="20" fill="#fff" stroke="#000" stroke-width="3"/>
<rect x="261" y="333" width="24" height="24" fill="#fff" stroke="#000" stroke-width="3"/>
</svg>
<div style="position:absolute;left:2331.0px;top:243.0px;width:115.0px;height:1917.0px;background:#2b2b2b;"></div>
<div style="position:absolute;left:2331.0px;top:243.0px;width:115.0px;height:97.0px;background:#2a2a2a;"></div>
<svg style="position:absolute;left:2346.0px;top:259.0px;" width="96" height="14" viewBox="0 0 96 14"><rect x="0.0" y="0" width="2.5" height="2.5" fill="#5a5a5a"/><rect x="9.6" y="0" width="2.5" height="2.5" fill="#5a5a5a"/><rect x="19.2" y="0" width="2.5" height="2.5" fill="#5a5a5a"/><rect x="28.799999999999997" y="0" width="2.5" height="2.5" fill="#5a5a5a"/><rect x="38.4" y="0" width="2.5" height="2.5" fill="#5a5a5a"/><rect x="48.0" y="0" width="2.5" height="2.5" fill="#5a5a5a"/><rect x="57.599999999999994" y="0" width="2.5" height="2.5" fill="#5a5a5a"/><rect x="67.2" y="0" width="2.5" height="2.5" fill="#5a5a5a"/><rect x="76.8" y="0" width="2.5" height="2.5" fill="#5a5a5a"/><rect x="86.39999999999999" y="0" width="2.5" height="2.5" fill="#5a5a5a"/><rect x="0.0" y="10" width="2.5" height="2.5" fill="#5a5a5a"/><rect x="9.6" y="10" width="2.5" height="2.5" fill="#5a5a5a"/><rect x="19.2" y="10" width="2.5" height="2.5" fill="#5a5a5a"/><rect x="28.799999999999997" y="10" width="2.5" height="2.5" fill="#5a5a5a"/><rect x="38.4" y="10" width="2.5" height="2.5" fill="#5a5a5a"/><rect x="48.0" y="10" width="2.5" height="2.5" fill="#5a5a5a"/><rect x="57.599999999999994" y="10" width="2.5" height="2.5" fill="#5a5a5a"/><rect x="67.2" y="10" width="2.5" height="2.5" fill="#5a5a5a"/><rect x="76.8" y="10" width="2.5" height="2.5" fill="#5a5a5a"/><rect x="86.39999999999999" y="10" width="2.5" height="2.5" fill="#5a5a5a"/></svg>
<div style="position:absolute;left:2331.0px;top:446.0px;width:115.0px;height:33.0px;background:#222222;"></div>
<div style="position:absolute;left:2331.0px;top:801.0px;width:115.0px;height:32.0px;background:#222222;"></div>
<div style="position:absolute;left:2331.0px;top:1154.0px;width:115.0px;height:15.0px;background:#222222;"></div>
<div style="position:absolute;left:2331.0px;top:1383.0px;width:115.0px;height:15.0px;background:#222222;"></div>
<div style="position:absolute;left:2331.0px;top:1502.0px;width:115.0px;height:33.0px;background:#222222;"></div>
<div style="position:absolute;left:2331.0px;top:1856.0px;width:115.0px;height:65.0px;background:#222222;"></div>
<div style="position:absolute;left:2336px;top:341px;width:105px;height:105px;background:#3b3b3b"></div>
<div style="position:absolute;left:2336px;top:479px;width:105px;height:103px;background:#3b3b3b"></div>
<div style="position:absolute;left:2336px;top:582px;width:105px;height:109px;background:#3b3b3b"></div>
<div style="position:absolute;left:2336px;top:691px;width:105px;height:110px;background:#3b3b3b"></div>
<div style="position:absolute;left:2336px;top:833px;width:105px;height:104px;background:#3b3b3b"></div>
<div style="position:absolute;left:2336px;top:937px;width:105px;height:108px;background:#3b3b3b"></div>
<div style="position:absolute;left:2336px;top:1045px;width:105px;height:109px;background:#3b3b3b"></div>
<div style="position:absolute;left:2336px;top:1169px;width:105px;height:103px;background:#3b3b3b"></div>
<div style="position:absolute;left:2336px;top:1272px;width:105px;height:111px;background:#3b3b3b"></div>
<div style="position:absolute;left:2336px;top:1398px;width:105px;height:104px;background:#3b3b3b"></div>
<div style="position:absolute;left:2336px;top:1535px;width:105px;height:104px;background:#3b3b3b"></div>
<div style="position:absolute;left:2336px;top:1639px;width:105px;height:107px;background:#3b3b3b"></div>
<div style="position:absolute;left:2336px;top:1746px;width:105px;height:110px;background:#3b3b3b"></div>
<div style="position:absolute;left:2336px;top:1921px;width:105px;height:107px;background:#3b3b3b"></div>
<div style="position:absolute;left:2331.0px;top:2028.0px;width:115.0px;height:132.0px;background:#222222;"></div>
<svg style="position:absolute;left:2331.0px;top:341.0px;" width="115" height="105" viewBox="0 0 115 105"><g stroke="#c8d2f4" stroke-width="6" fill="none" stroke-linecap="round" stroke-linejoin="round"><path d="M34 22 V77 H90"/><path d="M22 34 L34 20 L46 34 M78 65 L92 77 L78 89"/></g><circle cx="72" cy="36" r="18" fill="#c8d2f4"/></svg>
<svg style="position:absolute;left:2331.0px;top:479.0px;" width="115" height="103" viewBox="0 0 115 103"><rect x="29" y="23" width="57" height="57" fill="none" stroke="#84d0f2" stroke-width="6"/></svg>
<svg style="position:absolute;left:2427.0px;top:568.0px;" width="14" height="14" viewBox="0 0 14 14"><path d="M14 0 V14 H0 Z" fill="#a8a8a8"/></svg>
<svg style="position:absolute;left:2331.0px;top:582.0px;" width="115" height="109" viewBox="0 0 115 109"><path d="M57 20 L88 37 V74 L57 91 L26 74 V37 Z" fill="#84d0f2"/><path d="M26 37 L57 55 L88 37 M57 55 V91" stroke="#2e3a44" stroke-width="3" fill="none"/></svg>
<svg style="position:absolute;left:2427.0px;top:677.0px;" width="14" height="14" viewBox="0 0 14 14"><path d="M14 0 V14 H0 Z" fill="#a8a8a8"/></svg>
<svg style="position:absolute;left:2331.0px;top:691.0px;" width="115" height="110" viewBox="0 0 115 110"><path d="M26 35 V24 H89 V35 M57 24 V86 M40 86 H74" stroke="#84d0f2" stroke-width="6" fill="none"/></svg>
<svg style="position:absolute;left:2427.0px;top:787.0px;" width="14" height="14" viewBox="0 0 14 14"><path d="M14 0 V14 H0 Z" fill="#a8a8a8"/></svg>
<svg style="position:absolute;left:2331.0px;top:833.0px;" width="115" height="104" viewBox="0 0 115 104"><circle cx="57" cy="53" r="19" fill="#5ed888"/><rect x="50" y="15" width="14" height="14" fill="none" stroke="#5ed888" stroke-width="3.5"/><rect x="50" y="76" width="14" height="14" fill="none" stroke="#5ed888" stroke-width="3.5"/><rect x="21" y="27" width="14" height="14" fill="none" stroke="#5ed888" stroke-width="3.5"/><rect x="79" y="27" width="14" height="14" fill="none" stroke="#5ed888" stroke-width="3.5"/><rect x="21" y="63" width="14" height="14" fill="none" stroke="#5ed888" stroke-width="3.5"/><rect x="79" y="63" width="14" height="14" fill="none" stroke="#5ed888" stroke-width="3.5"/><path d="M35 28 L50 22 M64 22 L79 28 M28 43 V61 M86 43 V61 M35 77 L50 83 M64 83 L79 77" stroke="#5ed888" stroke-width="3"/></svg>
<svg style="position:absolute;left:2427.0px;top:923.0px;" width="14" height="14" viewBox="0 0 14 14"><path d="M14 0 V14 H0 Z" fill="#a8a8a8"/></svg>
<svg style="position:absolute;left:2331.0px;top:937.0px;" width="115" height="108" viewBox="0 0 115 108"><path d="M57 18 L75 28 V48 L57 58 L39 48 V28 Z" fill="#5ccf7a"/><path d="M57 38 L75 28 V48 L57 58 Z" fill="#3ea35a"/><path d="M38 50 L56 60 V80 L38 90 L20 80 V60 Z" fill="#5ccf7a"/><path d="M38 70 L56 60 V80 L38 90 Z" fill="#3ea35a"/><path d="M75 50 L93 60 V80 L75 90 L57 80 V60 Z" fill="#5ccf7a"/><path d="M75 70 L93 60 V80 L75 90 Z" fill="#3ea35a"/></svg>
<svg style="position:absolute;left:2427.0px;top:1031.0px;" width="14" height="14" viewBox="0 0 14 14"><path d="M14 0 V14 H0 Z" fill="#a8a8a8"/></svg>
<svg style="position:absolute;left:2331.0px;top:1045.0px;" width="115" height="109" viewBox="0 0 115 109"><path d="M83.9 58.6 L82.8 63.8 L73.8 65.0 L71.7 68.1 L74.1 76.9 L69.7 79.8 L62.5 74.2 L58.9 74.9 L54.4 82.9 L49.2 81.8 L48.0 72.8 L44.9 70.7 L36.1 73.1 L33.2 68.7 L38.8 61.5 L38.1 57.9 L30.1 53.4 L31.2 48.2 L40.2 47.0 L42.3 43.9 L39.9 35.1 L44.3 32.2 L51.5 37.8 L55.1 37.1 L59.6 29.1 L64.8 30.2 L66.0 39.2 L69.1 41.3 L77.9 38.9 L80.8 43.3 L75.2 50.5 L75.9 54.1 Z" fill="#f4f4f4"/><circle cx="57.0" cy="28.0" r="7.5" fill="#5ed888"/><circle cx="79.1" cy="38.8" r="7.5" fill="#5ed888"/><circle cx="84.2" cy="62.8" r="7.5" fill="#5ed888"/><circle cx="68.4" cy="81.6" r="7.5" fill="#5ed888"/><circle cx="43.9" cy="80.7" r="7.5" fill="#5ed888"/><circle cx="29.4" cy="60.9" r="7.5" fill="#5ed888"/><circle cx="36.2" cy="37.3" r="7.5" fill="#5ed888"/><circle cx="57" cy="56" r="9" fill="#5ed888" stroke="#3b3b3b" stroke-width="2"/><circle cx="92" cy="21" r="9" fill="#d8cc78"/></svg>
<svg style="position:absolute;left:2427.0px;top:1140.0px;" width="14" height="14" viewBox="0 0 14 14"><path d="M14 0 V14 H0 Z" fill="#d8cc78"/></svg>
<svg style="position:absolute;left:2331.0px;top:1169.0px;" width="115" height="103" viewBox="0 0 115 103"><path d="M28 32 L50 20 L74 32 L88 71 L64 88 L52 78 L46 70 L30 62 Z" fill="none" stroke="#9a90f0" stroke-width="5" stroke-linejoin="round"/><path d="M46 38 Q64 50 66 82" stroke="#9a90f0" stroke-width="4" fill="none"/></svg>
<svg style="position:absolute;left:2427.0px;top:1258.0px;" width="14" height="14" viewBox="0 0 14 14"><path d="M14 0 V14 H0 Z" fill="#a8a8a8"/></svg>
<svg style="position:absolute;left:2331.0px;top:1272.0px;" width="115" height="111" viewBox="0 0 115 111"><g stroke="#9a90f0" stroke-width="5.5" fill="none" stroke-linecap="round" stroke-linejoin="round"><path d="M34 32 V86 H86"/><path d="M22 44 L34 30 L46 44 M74 74 L88 86 L74 98"/></g><g stroke="#9a90f0" stroke-width="3.5" fill="none"><path d="M73 22 L89 31 V49 L73 58 L57 49 V31 Z"/><path d="M57 31 L73 40 L89 31 M73 40 V58"/></g></svg>
<svg style="position:absolute;left:2427.0px;top:1369.0px;" width="14" height="14" viewBox="0 0 14 14"><path d="M14 0 V14 H0 Z" fill="#a8a8a8"/></svg>
<svg style="position:absolute;left:2331.0px;top:1398.0px;" width="115" height="104" viewBox="0 0 115 104"><g stroke="#e090ec" stroke-width="5" fill="none" stroke-linejoin="round"><path d="M27 34 L55 50 V87 L27 71 Z"/><path d="M58 17 L88 33 V72 L58 55 Z"/><path d="M43 61 L72 44" stroke-width="3.5"/></g></svg>
<svg style="position:absolute;left:2427.0px;top:1488.0px;" width="14" height="14" viewBox="0 0 14 14"><path d="M14 0 V14 H0 Z" fill="#a8a8a8"/></svg>
<svg style="position:absolute;left:2331.0px;top:1535.0px;" width="115" height="104" viewBox="0 0 115 104"><path d="M93.0 52.0 L84.7 63.5 L82.5 77.5 L68.5 79.7 L57.0 88.0 L45.5 79.7 L31.5 77.5 L29.3 63.5 L21.0 52.0 L29.3 40.5 L31.5 26.5 L45.5 24.3 L57.0 16.0 L68.5 24.3 L82.5 26.5 L84.7 40.5 Z" fill="#c8d2f4"/><circle cx="57" cy="52" r="25" fill="#3b3b3b"/><circle cx="67" cy="45" r="19" fill="#c8d2f4"/></svg>
<svg style="position:absolute;left:2427.0px;top:1625.0px;" width="14" height="14" viewBox="0 0 14 14"><path d="M14 0 V14 H0 Z" fill="#a8a8a8"/></svg>
<svg style="position:absolute;left:2331.0px;top:1639.0px;" width="115" height="107" viewBox="0 0 115 107"><g stroke="#c8d2f4" stroke-width="5" fill="none"><rect x="22" y="47" width="50" height="34" rx="4"/><path d="M26 47 V31 H53 V47"/></g><path d="M95 40 V90 L76 74 V56 Z" fill="#c8d2f4"/></svg>
<svg style="position:absolute;left:2427.0px;top:1732.0px;" width="14" height="14" viewBox="0 0 14 14"><path d="M14 0 V14 H0 Z" fill="#a8a8a8"/></svg>
<svg style="position:absolute;left:2331.0px;top:1746.0px;" width="115" height="110" viewBox="0 0 115 110"><g stroke="#c0c4d8" stroke-width="4.5" fill="none" stroke-linecap="round"><path d="M26 22 H88 L80 65 H34 Z"/><path d="M57 34 V90 M47 79 L57 90 L67 79"/></g></svg>
<svg style="position:absolute;left:2427.0px;top:1842.0px;" width="14" height="14" viewBox="0 0 14 14"><path d="M14 0 V14 H0 Z" fill="#a8a8a8"/></svg>
<svg style="position:absolute;left:2331.0px;top:1921.0px;" width="115" height="107" viewBox="0 0 115 107"><path d="M55 17 L86 35 V71 L55 89 L24 71 V35 Z" fill="none" stroke="#a8a8a8" stroke-width="4.5"/><path d="M87 22 L52 57" stroke="#f0f0f0" stroke-width="8" stroke-linecap="round"/></svg>
<svg style="position:absolute;left:2427.0px;top:2014.0px;" width="14" height="14" viewBox="0 0 14 14"><path d="M14 0 V14 H0 Z" fill="#a8a8a8"/></svg>
<div style="position:absolute;left:2446.0px;top:243.0px;width:1394.0px;height:14.0px;background:#2a2a2a;"></div>
<div style="position:absolute;left:2446.0px;top:257.0px;width:1394.0px;height:68.0px;background:#1b1b1b;"></div>
<div style="position:absolute;left:2449px;top:257px;width:177px;height:68px;background:#2a2a2a;border-radius:6px 6px 0 0"></div>
<div class="t" style="left:2480.4px;top:273px;font-size:35.61px;color:#e6e6e6;letter-spacing:-1.32px;">Objects</div>
<div class="t" style="left:2666.2px;top:273px;font-size:35.61px;color:#a0a0a0;letter-spacing:-3.75px;">Takes</div>
<div style="position:absolute;left:2446.0px;top:325.0px;width:1394.0px;height:67.0px;background:#2a2a2a;"></div>
<div style="position:absolute;left:2467.0px;top:343.0px;width:41.0px;height:4.5px;background:#a8a8a8;"></div>
<div style="position:absolute;left:2467.0px;top:356.0px;width:41.0px;height:4.5px;background:#a8a8a8;"></div>
<div style="position:absolute;left:2467.0px;top:369.0px;width:41.0px;height:4.5px;background:#a8a8a8;"></div>
<div class="t" style="left:2536.2px;top:338px;font-size:34.88px;color:#b4b4b4;letter-spacing:-1.30px;">File</div>
<div class="t" style="left:2630.2px;top:338px;font-size:34.88px;color:#b4b4b4;letter-spacing:-1.03px;">Edit</div>
<div class="t" style="left:2730.9px;top:338px;font-size:34.88px;color:#b4b4b4;letter-spacing:-2.00px;">View</div>
<div class="t" style="left:2844.4px;top:338px;font-size:34.88px;color:#b4b4b4;letter-spacing:-0.82px;">Object</div>
<div class="t" style="left:2982.3px;top:338px;font-size:34.88px;color:#d2d68c;letter-spacing:-3.27px;">Tags</div>
<div class="t" style="left:3089.2px;top:338px;font-size:34.88px;color:#b4b4b4;letter-spacing:-1.44px;">Bookmarks</div>
<div style="position:absolute;left:2446.0px;top:391.0px;width:1394.0px;height:2.0px;background:#1c1c1c;"></div>
<div style="position:absolute;left:2446.0px;top:393.0px;width:1394.0px;height:732.0px;background:#2a2a2a;"></div>
<div style="position:absolute;left:2446.0px;top:398.0px;width:591.0px;height:60.0px;background:#212121;"></div>
<div style="position:absolute;left:3037.0px;top:398.0px;width:763.0px;height:60.0px;background:#262626;"></div>
<div style="position:absolute;left:2446.0px;top:457.9px;width:591.0px;height:60.0px;background:#2b2b2b;"></div>
<div style="position:absolute;left:3037.0px;top:457.9px;width:763.0px;height:60.0px;background:#2b2b2b;"></div>
<div style="position:absolute;left:2446.0px;top:517.8px;width:591.0px;height:60.0px;background:#212121;"></div>
<div style="position:absolute;left:3037.0px;top:517.8px;width:763.0px;height:60.0px;background:#262626;"></div>
<div style="position:absolute;left:2446.0px;top:577.7px;width:591.0px;height:60.0px;background:#2b2b2b;"></div>
<div style="position:absolute;left:3037.0px;top:577.7px;width:763.0px;height:60.0px;background:#2b2b2b;"></div>
<div style="position:absolute;left:2446.0px;top:637.6px;width:591.0px;height:60.0px;background:#212121;"></div>
<div style="position:absolute;left:3037.0px;top:637.6px;width:763.0px;height:60.0px;background:#262626;"></div>
<div style="position:absolute;left:2446.0px;top:697.5px;width:591.0px;height:60.0px;background:#2b2b2b;"></div>
<div style="position:absolute;left:3037.0px;top:697.5px;width:763.0px;height:60.0px;background:#2b2b2b;"></div>
<div style="position:absolute;left:2446.0px;top:757.4px;width:591.0px;height:60.0px;background:#212121;"></div>
<div style="position:absolute;left:3037.0px;top:757.4px;width:763.0px;height:60.0px;background:#262626;"></div>
<div style="position:absolute;left:2446.0px;top:817.3px;width:591.0px;height:60.0px;background:#2b2b2b;"></div>
<div style="position:absolute;left:3037.0px;top:817.3px;width:763.0px;height:60.0px;background:#2b2b2b;"></div>
<div style="position:absolute;left:2446.0px;top:877.2px;width:591.0px;height:60.0px;background:#212121;"></div>
<div style="position:absolute;left:3037.0px;top:877.2px;width:763.0px;height:60.0px;background:#262626;"></div>
<div style="position:absolute;left:2446.0px;top:937.1px;width:591.0px;height:60.0px;background:#2b2b2b;"></div>
<div style="position:absolute;left:3037.0px;top:937.1px;width:763.0px;height:60.0px;background:#2b2b2b;"></div>
<div style="position:absolute;left:2446.0px;top:997.0px;width:591.0px;height:60.0px;background:#212121;"></div>
<div style="position:absolute;left:3037.0px;top:997.0px;width:763.0px;height:60.0px;background:#262626;"></div>
<div style="position:absolute;left:2446.0px;top:1056.9px;width:591.0px;height:60.0px;background:#2b2b2b;"></div>
<div style="position:absolute;left:3037.0px;top:1056.9px;width:763.0px;height:60.0px;background:#2b2b2b;"></div>
<div style="position:absolute;left:3814.0px;top:398.0px;width:13.0px;height:583.0px;background:#4a4a4a;border-radius:6px"></div>
<div class="t" style="left:2555.3px;top:412px;font-size:33.43px;color:#d9914c;letter-spacing:-0.79px;">Logo Scene</div>
<div style="position:absolute;left:2906px;top:410.0px;width:33px;height:32px;background:#5a5a5a;border-radius:5px"></div>
<svg style="position:absolute;left:2906.0px;top:410.0px;" width="33" height="32" viewBox="0 0 33 32"><path d="M9 24 L24 9" stroke="#2a2a2a" stroke-width="4" stroke-linecap="round"/></svg>
<div style="position:absolute;left:2955px;top:405.0px;width:18px;height:18px;background:#5e5e5e;border-radius:9px"></div>
<div style="position:absolute;left:2955px;top:432.0px;width:18px;height:18px;background:#5e5e5e;border-radius:9px"></div>
<div class="t" style="left:2591.3px;top:472px;font-size:33.43px;color:#c6c6c6;letter-spacing:-2.10px;">RS Camera</div>
<div style="position:absolute;left:2906px;top:469.9px;width:33px;height:32px;background:#5a5a5a;border-radius:5px"></div>
<svg style="position:absolute;left:2906.0px;top:469.9px;" width="33" height="32" viewBox="0 0 33 32"><path d="M9 24 L24 9" stroke="#2a2a2a" stroke-width="4" stroke-linecap="round"/></svg>
<div style="position:absolute;left:2955px;top:464.9px;width:18px;height:18px;background:#5e5e5e;border-radius:9px"></div>
<div style="position:absolute;left:2955px;top:491.9px;width:18px;height:18px;background:#5e5e5e;border-radius:9px"></div>
<div class="t" style="left:2591.3px;top:532px;font-size:33.43px;color:#c6c6c6;letter-spacing:0.38px;">Logo Anim</div>
<div style="position:absolute;left:2906px;top:529.8px;width:33px;height:32px;background:#5a5a5a;border-radius:5px"></div>
<svg style="position:absolute;left:2906.0px;top:529.8px;" width="33" height="32" viewBox="0 0 33 32"><path d="M9 24 L24 9" stroke="#2a2a2a" stroke-width="4" stroke-linecap="round"/></svg>
<div style="position:absolute;left:2955px;top:524.8px;width:18px;height:18px;background:#5e5e5e;border-radius:9px"></div>
<div style="position:absolute;left:2955px;top:551.8px;width:18px;height:18px;background:#5e5e5e;border-radius:9px"></div>
<div class="t" style="left:2627.4px;top:592px;font-size:33.43px;color:#c6c6c6;letter-spacing:-1.39px;">Glass Sphere</div>
<div style="position:absolute;left:2906px;top:589.7px;width:33px;height:32px;background:#5a5a5a;border-radius:5px"></div>
<svg style="position:absolute;left:2906.0px;top:589.7px;" width="33" height="32" viewBox="0 0 33 32"><path d="M9 24 L24 9" stroke="#2a2a2a" stroke-width="4" stroke-linecap="round"/></svg>
<div style="position:absolute;left:2955px;top:584.7px;width:18px;height:18px;background:#5e5e5e;border-radius:9px"></div>
<div style="position:absolute;left:2955px;top:611.7px;width:18px;height:18px;background:#5e5e5e;border-radius:9px"></div>
<div class="t" style="left:2626.3px;top:652px;font-size:33.43px;color:#c6c6c6;letter-spacing:-0.65px;">Bevel</div>
<div style="position:absolute;left:2906px;top:649.6px;width:33px;height:32px;background:#5a5a5a;border-radius:5px"></div>
<svg style="position:absolute;left:2906.0px;top:649.6px;" width="33" height="32" viewBox="0 0 33 32"><path d="M9 24 L24 9" stroke="#2a2a2a" stroke-width="4" stroke-linecap="round"/></svg>
<div style="position:absolute;left:2955px;top:644.6px;width:18px;height:18px;background:#5e5e5e;border-radius:9px"></div>
<div style="position:absolute;left:2955px;top:671.6px;width:18px;height:18px;background:#5e5e5e;border-radius:9px"></div>
<div class="t" style="left:2626.3px;top:712px;font-size:33.43px;color:#c6c6c6;letter-spacing:-1.32px;">Remesh</div>
<div style="position:absolute;left:2906px;top:709.5px;width:33px;height:32px;background:#5a5a5a;border-radius:5px"></div>
<svg style="position:absolute;left:2906.0px;top:709.5px;" width="33" height="32" viewBox="0 0 33 32"><path d="M9 24 L24 9" stroke="#2a2a2a" stroke-width="4" stroke-linecap="round"/></svg>
<div style="position:absolute;left:2955px;top:704.5px;width:18px;height:18px;background:#5e5e5e;border-radius:9px"></div>
<div style="position:absolute;left:2955px;top:731.5px;width:18px;height:18px;background:#5e5e5e;border-radius:9px"></div>
<div class="t" style="left:2663.3px;top:771px;font-size:33.43px;color:#c6c6c6;letter-spacing:-0.05px;">Boole</div>
<div style="position:absolute;left:2906px;top:769.4px;width:33px;height:32px;background:#5a5a5a;border-radius:5px"></div>
<svg style="position:absolute;left:2906.0px;top:769.4px;" width="33" height="32" viewBox="0 0 33 32"><path d="M9 24 L24 9" stroke="#2a2a2a" stroke-width="4" stroke-linecap="round"/></svg>
<div style="position:absolute;left:2955px;top:764.4px;width:18px;height:18px;background:#5e5e5e;border-radius:9px"></div>
<div style="position:absolute;left:2955px;top:791.4px;width:18px;height:18px;background:#5e5e5e;border-radius:9px"></div>
<div class="t" style="left:2699.5px;top:831px;font-size:33.43px;color:#c6c6c6;letter-spacing:-0.74px;">Sphere</div>
<div style="position:absolute;left:2906px;top:829.3px;width:33px;height:32px;background:#5a5a5a;border-radius:5px"></div>
<svg style="position:absolute;left:2906.0px;top:829.3px;" width="33" height="32" viewBox="0 0 33 32"><path d="M9 24 L24 9" stroke="#2a2a2a" stroke-width="4" stroke-linecap="round"/></svg>
<div style="position:absolute;left:2955px;top:824.3px;width:18px;height:18px;background:#5e5e5e;border-radius:9px"></div>
<div style="position:absolute;left:2955px;top:851.3px;width:18px;height:18px;background:#5e5e5e;border-radius:9px"></div>
<div class="t" style="left:2699.4px;top:891px;font-size:33.43px;color:#c6c6c6;letter-spacing:-0.20px;">Cylinder</div>
<div style="position:absolute;left:2906px;top:889.2px;width:33px;height:32px;background:#5a5a5a;border-radius:5px"></div>
<svg style="position:absolute;left:2906.0px;top:889.2px;" width="33" height="32" viewBox="0 0 33 32"><path d="M9 24 L24 9" stroke="#2a2a2a" stroke-width="4" stroke-linecap="round"/></svg>
<div style="position:absolute;left:2955px;top:884.2px;width:18px;height:18px;background:#5e5e5e;border-radius:9px"></div>
<div style="position:absolute;left:2955px;top:911.2px;width:18px;height:18px;background:#5e5e5e;border-radius:9px"></div>
<div class="t" style="left:2591.3px;top:951px;font-size:33.43px;color:#e6c266;letter-spacing:-0.14px;">Backdrop</div>
<div style="position:absolute;left:2906px;top:949.1px;width:33px;height:32px;background:#5a5a5a;border-radius:5px"></div>
<svg style="position:absolute;left:2906.0px;top:949.1px;" width="33" height="32" viewBox="0 0 33 32"><path d="M9 24 L24 9" stroke="#2a2a2a" stroke-width="4" stroke-linecap="round"/></svg>
<div style="position:absolute;left:2955px;top:944.1px;width:18px;height:18px;background:#5e5e5e;border-radius:9px"></div>
<div style="position:absolute;left:2955px;top:971.1px;width:18px;height:18px;background:#5e5e5e;border-radius:9px"></div>
<div class="t" style="left:2591.3px;top:1011px;font-size:33.43px;color:#c6c6c6;letter-spacing:0.69px;">Lighting</div>
<div style="position:absolute;left:2906px;top:1009.0px;width:33px;height:32px;background:#5a5a5a;border-radius:5px"></div>
<svg style="position:absolute;left:2906.0px;top:1009.0px;" width="33" height="32" viewBox="0 0 33 32"><path d="M9 24 L24 9" stroke="#2a2a2a" stroke-width="4" stroke-linecap="round"/></svg>
<div style="position:absolute;left:2955px;top:1004.0px;width:18px;height:18px;background:#5e5e5e;border-radius:9px"></div>
<div style="position:absolute;left:2955px;top:1031.0px;width:18px;height:18px;background:#5e5e5e;border-radius:9px"></div>
<div class="t" style="left:2626.3px;top:1071px;font-size:33.43px;color:#c6c6c6;letter-spacing:-0.63px;">RS Dome Light</div>
<div style="position:absolute;left:2906px;top:1068.9px;width:33px;height:32px;background:#5a5a5a;border-radius:5px"></div>
<svg style="position:absolute;left:2906.0px;top:1068.9px;" width="33" height="32" viewBox="0 0 33 32"><path d="M9 24 L24 9" stroke="#2a2a2a" stroke-width="4" stroke-linecap="round"/></svg>
<div style="position:absolute;left:2955px;top:1063.9px;width:18px;height:18px;background:#5e5e5e;border-radius:9px"></div>
<div style="position:absolute;left:2955px;top:1090.9px;width:18px;height:18px;background:#5e5e5e;border-radius:9px"></div>
<svg style="position:absolute;left:0.0px;top:0.0px;" width="3840" height="1130" viewBox="0 0 3840 1130"><path d="M2474 398 V416" stroke="#6a6a6a" stroke-width="2.5" fill="none"/><path d="M2510 442 V1016 M2510 487.9 H2536 M2510 967.1 H2534" stroke="#6a6a6a" stroke-width="2.5" fill="none"/><path d="M2487 428.0 H2501 M2523 547.8 H2537 M2523 1027.0 H2537" stroke="#6a6a6a" stroke-width="2.5" fill="none"/><path d="M2547 567.8 V715.5 M2547 607.7 H2572 M2547 667.6 H2572 M2559 727.5 H2572" stroke="#6a6a6a" stroke-width="2.5" fill="none"/><path d="M2582 745.5 V775.4 M2596 787.4 H2611" stroke="#6a6a6a" stroke-width="2.5" fill="none"/><path d="M2619 805.4 V907.2 H2644 M2619 847.3 H2644" stroke="#6a6a6a" stroke-width="2.5" fill="none"/><path d="M2547 1045.0 V1117 M2547 1086.9 H2572" stroke="#6a6a6a" stroke-width="2.5" fill="none"/><rect x="2461" y="416.0" width="26" height="24" fill="#242424" stroke="#8a8a8a" stroke-width="3"/><path d="M2467 428.0 H2481" stroke="#8a8a8a" stroke-width="3"/><rect x="2496" y="535.8" width="26" height="24" fill="#242424" stroke="#8a8a8a" stroke-width="3"/><path d="M2502 547.8 H2516" stroke="#8a8a8a" stroke-width="3"/><rect x="2532" y="715.5" width="26" height="24" fill="#242424" stroke="#8a8a8a" stroke-width="3"/><path d="M2538 727.5 H2552" stroke="#8a8a8a" stroke-width="3"/><rect x="2569" y="775.4" width="26" height="24" fill="#242424" stroke="#8a8a8a" stroke-width="3"/><path d="M2575 787.4 H2589" stroke="#8a8a8a" stroke-width="3"/><rect x="2496" y="1015.0" width="26" height="24" fill="#242424" stroke="#8a8a8a" stroke-width="3"/><path d="M2502 1027.0 H2516" stroke="#8a8a8a" stroke-width="3"/><path d="M2502 416.0 H2516 L2521 421.0 H2541 V442.0 H2502 Z" fill="none" stroke="#78b8b4" stroke-width="3"/><g stroke="#d8dcf0" stroke-width="3" fill="none"><rect x="2539" y="486.9" width="27" height="17" rx="2"/><path d="M2542 486.9 V475.9 H2558 V486.9"/></g><path d="M2579 481.9 V503.9 L2568 495.9 V488.9 Z" fill="#d8dcf0"/><circle cx="2557" cy="547.8" r="19" fill="#c8c8c8"/><circle cx="2593" cy="607.7" r="20" fill="#8ad0f0"/><path d="M2573 609.7 Q2593 617.7 2613 609.7" stroke="#2a2a2a" stroke-width="3" fill="none"/><path d="M2592 648.6 L2609 658.6 V677.6 L2592 687.6 L2575 677.6 V658.6 Z" fill="#9a8ff0"/><path d="M2575 658.6 L2592 668.6 L2609 658.6 M2592 668.6 V687.6" stroke="#2a2a2a" stroke-width="2.5" fill="none"/><path d="M2584 657.6 L2592 653.6 L2600 657.6 L2592 662.6 Z" fill="#e0dcff"/><path d="M2593 708.5 L2613 743.5 H2573 Z" fill="none" stroke="#5ed888" stroke-width="3.5" stroke-linejoin="round"/><path d="M2586 735.5 L2593 725.5 L2600 735.5 Z" fill="none" stroke="#5ed888" stroke-width="2.5"/><rect x="2612" y="769.4" width="22" height="22" fill="#f4f4f4"/><rect x="2624" y="781.4" width="24" height="24" fill="#5ed888"/><circle cx="2665" cy="847.3" r="20" fill="#8ad0f0"/><path d="M2645 849.3 Q2665 857.3 2685 849.3" stroke="#2a2a2a" stroke-width="3" fill="none"/><path d="M2649 895.2 V921.2 A16 6 0 0 0 2681 921.2 V895.2 Z" fill="#8ad0f0"/><ellipse cx="2665" cy="895.2" rx="16" ry="6" fill="#b8e4f8" stroke="#2a2a2a" stroke-width="2"/><path d="M2536 957.1 L2560 947.1 L2558 967.1 L2578 975.1 L2556 987.1 L2536 977.1 Z" fill="#8ad0f0"/><path d="M2538 1014.0 H2552 L2557 1019.0 H2576 V1041.0 H2538 Z" fill="none" stroke="#d6be6c" stroke-width="3"/><g stroke="#d0d0d0" stroke-width="2.5" fill="none"><circle cx="2593" cy="1086.9" r="18"/><ellipse cx="2593" cy="1086.9" rx="8" ry="18"/><path d="M2575 1086.9 H2611 M2578 1077.9 H2608 M2578 1095.9 H2608"/></g><path d="M2988 608.7 L2999 618.7 L3021 596.7" stroke="#5cd888" stroke-width="5" fill="none"/><path d="M2988 668.6 L2999 678.6 L3021 656.6" stroke="#5cd888" stroke-width="5" fill="none"/><path d="M2988 728.5 L2999 738.5 L3021 716.5" stroke="#5cd888" stroke-width="5" fill="none"/><path d="M2988 788.4 L2999 798.4 L3021 776.4" stroke="#5cd888" stroke-width="5" fill="none"/><path d="M2988 848.3 L2999 858.3 L3021 836.3" stroke="#5cd888" stroke-width="5" fill="none"/><path d="M2988 908.2 L2999 918.2 L3021 896.2" stroke="#5cd888" stroke-width="5" fill="none"/><path d="M2988 968.1 L2999 978.1 L3021 956.1" stroke="#5cd888" stroke-width="5" fill="none"/><path d="M2988 1087.9 L2999 1097.9 L3021 1075.9" stroke="#5cd888" stroke-width="5" fill="none"/><path d="M3050 623.7 V595.7 L3090 590.7 M3050 595.7 Q3070 597.7 3068 610.7 L3050 613.7" stroke="#8a86e6" stroke-width="3.5" fill="none"/><path d="M3050 743.5 V715.5 L3090 710.5 M3050 715.5 Q3070 717.5 3068 730.5 L3050 733.5" stroke="#8a86e6" stroke-width="3.5" fill="none"/><path d="M3050 863.3 V835.3 L3090 830.3 M3050 835.3 Q3070 837.3 3068 850.3 L3050 853.3" stroke="#8a86e6" stroke-width="3.5" fill="none"/><path d="M3050 923.2 V895.2 L3090 890.2 M3050 895.2 Q3070 897.2 3068 910.2 L3050 913.2" stroke="#8a86e6" stroke-width="3.5" fill="none"/><path d="M3050 983.1 V955.1 L3090 950.1 M3050 955.1 Q3070 957.1 3068 970.1 L3050 973.1" stroke="#8a86e6" stroke-width="3.5" fill="none"/><defs><radialGradient id="mb1" cx="0.35" cy="0.3" r="0.7"><stop offset="0" stop-color="#4a4a50"/><stop offset="0.3" stop-color="#0a0a10"/><stop offset="1" stop-color="#000"/></radialGradient><radialGradient id="mb2" cx="0.35" cy="0.3" r="0.75"><stop offset="0" stop-color="#b0b0b0"/><stop offset="0.6" stop-color="#6a6a6a"/><stop offset="1" stop-color="#303030"/></radialGradient></defs><rect x="3101" y="580.7" width="57" height="54" fill="#555"/><circle cx="3129" cy="607.7" r="25" fill="url(#mb1)"/><circle cx="3120" cy="597.7" r="4" fill="#cfcfd8" opacity="0.7"/><rect x="3042" y="760.4" width="56" height="54" fill="#555"/><circle cx="3070" cy="787.4" r="25" fill="url(#mb2)"/><rect x="3101" y="940.1" width="57" height="54" fill="#555"/><circle cx="3129" cy="967.1" r="25" fill="url(#mb2)"/><rect x="3170" y="950.1" width="38" height="34" fill="#f0f0f0" stroke="#9a9a9a" stroke-width="2"/><rect x="3189" y="950.1" width="19" height="17" fill="#bdbdbd"/><rect x="3170" y="967.1" width="19" height="17" fill="#1a1a1a"/><rect x="3161" y="968.1" width="22" height="22" fill="#fff"/><path d="M3166 985.1 Q3168 973.1 3178 973.1" stroke="#000" stroke-width="4" fill="none"/><g fill="#f0f0f0"><path d="M2991 471.9 H3003 V476.9 H2996 V482.9 H2991 Z M3022 471.9 H3010 V476.9 H3017 V482.9 H3022 Z M2991 503.9 H3003 V498.9 H2996 V492.9 H2991 Z M3022 503.9 H3010 V498.9 H3017 V492.9 H3022 Z"/><circle cx="3006.5" cy="487.9" r="4.5"/></g></svg>
<div style="position:absolute;left:2446.0px;top:1117.0px;width:1394.0px;height:8.0px;background:#2a2a2a;"></div>
<div style="position:absolute;left:2446.0px;top:1125.0px;width:1394.0px;height:4.0px;background:#1d1d1d;"></div>
<div style="position:absolute;left:2446.0px;top:1129.0px;width:1394.0px;height:67.0px;background:#1b1b1b;"></div>
<div style="position:absolute;left:2449px;top:1132px;width:210px;height:64px;background:#2a2a2a;border-radius:6px 6px 0 0"></div>
<div class="t" style="left:2482.0px;top:1148px;font-size:34.16px;color:#e2e2e2;letter-spacing:-0.03px;">Attributes</div>
<div class="t" style="left:2695.2px;top:1148px;font-size:34.16px;color:#a0a0a0;letter-spacing:-1.74px;">Layers</div>
<div style="position:absolute;left:2446.0px;top:1196.0px;width:1394.0px;height:964.0px;background:#2a2a2a;"></div>
<div style="position:absolute;left:2466.0px;top:1215.0px;width:43.0px;height:4.5px;background:#a8a8a8;"></div>
<div style="position:absolute;left:2466.0px;top:1229.0px;width:43.0px;height:4.5px;background:#a8a8a8;"></div>
<div style="position:absolute;left:2466.0px;top:1243.0px;width:43.0px;height:4.5px;background:#a8a8a8;"></div>
<div class="t" style="left:2537.2px;top:1214px;font-size:34.88px;color:#b4b4b4;letter-spacing:0.00px;">Mode</div>
<div class="t" style="left:2665.4px;top:1214px;font-size:34.88px;color:#b4b4b4;letter-spacing:-1.57px;">User Data</div>
<div style="position:absolute;left:2446.0px;top:1265.0px;width:1394.0px;height:2.0px;background:#1e1e1e;"></div>
<svg style="position:absolute;left:2470.0px;top:1283.0px;" width="58" height="54" viewBox="0 0 58 54"><path d="M2 14 L34 0 L32 28 L56 38 L26 54 L2 42 Z" fill="#8ad0f0"/></svg>
<div class="t" style="left:2543.5px;top:1293px;font-size:33.43px;color:#bcbcbc;letter-spacing:-0.52px;">Scene Nodes Generator [Backdrop]</div>
<div style="position:absolute;left:3600px;top:1283px;width:223px;height:53px;background:#3b3b3b;border-radius:26px"></div>
<div style="position:absolute;left:3759.0px;top:1283.0px;width:2.0px;height:53.0px;background:#2a2a2a;"></div>
<div class="t" style="left:3620.4px;top:1293px;font-size:33.43px;color:#d0d0d0;letter-spacing:-0.08px;">Custom</div>
<svg style="position:absolute;left:3785.0px;top:1302.0px;" width="20" height="13" viewBox="0 0 20 13"><path d="M0 0 H20 L10 12 Z" fill="#d8d8d8"/></svg>
<div style="position:absolute;left:2466px;top:1348px;width:123px;height:57px;background:#363636;border-radius:10px"></div>
<div style="position:absolute;left:2602px;top:1348px;width:225px;height:57px;background:#363636;border-radius:10px"></div>
<div style="position:absolute;left:2837px;top:1348px;width:147px;height:57px;background:#5356a6;border-radius:10px"></div>
<div style="position:absolute;left:2993px;top:1348px;width:147px;height:57px;background:#363636;border-radius:10px"></div>
<div class="t" style="left:2489.3px;top:1361px;font-size:33.43px;color:#cfcfcf;letter-spacing:-1.55px;">Basic</div>
<div class="t" style="left:2624.4px;top:1361px;font-size:33.43px;color:#cfcfcf;letter-spacing:-0.23px;">Coordinates</div>
<div class="t" style="left:2861.5px;top:1361px;font-size:33.43px;color:#f0f0f0;letter-spacing:0.22px;">Object</div>
<div class="t" style="left:3017.3px;top:1361px;font-size:33.43px;color:#cfcfcf;letter-spacing:0.30px;">Phong</div>
<div class="t" style="left:2471.4px;top:1436px;font-size:34.88px;color:#ececec;letter-spacing:0.98px;">Object</div>
<div style="position:absolute;left:2694px;top:1498px;width:229px;height:56px;background:#181818;border-radius:10px"></div>
<svg style="position:absolute;left:2479.0px;top:1512.0px;" width="28" height="28" viewBox="0 0 28 28"><path d="M14 2 L26 14 L14 26 L2 14 Z" fill="none" stroke="#b4b4b4" stroke-width="3"/></svg>
<div class="t" style="left:2538.9px;top:1511px;font-size:34.88px;color:#b8b8b8;letter-spacing:0.02px;">Width</div>
<div class="t" style="left:2745.4px;top:1511px;font-size:34.88px;color:#dadada;letter-spacing:-1.33px;">1016 cm</div>
<div style="position:absolute;left:2694px;top:1562px;width:229px;height:56px;background:#181818;border-radius:10px"></div>
<svg style="position:absolute;left:2479.0px;top:1576.0px;" width="28" height="28" viewBox="0 0 28 28"><path d="M14 2 L26 14 L14 26 L2 14 Z" fill="none" stroke="#b4b4b4" stroke-width="3"/></svg>
<div class="t" style="left:2536.2px;top:1574px;font-size:34.88px;color:#b8b8b8;letter-spacing:-0.18px;">Height</div>
<div class="t" style="left:2741.2px;top:1574px;font-size:34.88px;color:#dadada;letter-spacing:-1.50px;">457.2 cm</div>
<div style="position:absolute;left:2694px;top:1624px;width:229px;height:56px;background:#181818;border-radius:10px"></div>
<svg style="position:absolute;left:2479.0px;top:1638.0px;" width="28" height="28" viewBox="0 0 28 28"><path d="M14 2 L26 14 L14 26 L2 14 Z" fill="none" stroke="#b4b4b4" stroke-width="3"/></svg>
<div class="t" style="left:2536.2px;top:1636px;font-size:34.88px;color:#b8b8b8;letter-spacing:0.22px;">Depth</div>
<div class="t" style="left:2732.7px;top:1636px;font-size:34.88px;color:#dadada;letter-spacing:-1.42px;">353.06 cm</div>
<div style="position:absolute;left:2694px;top:1689px;width:229px;height:56px;background:#181818;border-radius:10px"></div>
<svg style="position:absolute;left:2479.0px;top:1703.0px;" width="28" height="28" viewBox="0 0 28 28"><path d="M14 2 L26 14 L14 26 L2 14 Z" fill="none" stroke="#b4b4b4" stroke-width="3"/></svg>
<div class="t" style="left:2536.2px;top:1699px;font-size:34.88px;color:#b8b8b8;letter-spacing:-1.29px;">Extension</div>
<div class="t" style="left:2742.4px;top:1699px;font-size:34.88px;color:#dadada;letter-spacing:-1.67px;">101.6 cm</div>
<div style="position:absolute;left:2694px;top:1753px;width:229px;height:56px;background:#181818;border-radius:10px"></div>
<svg style="position:absolute;left:2479.0px;top:1767.0px;" width="28" height="28" viewBox="0 0 28 28"><path d="M14 2 L26 14 L14 26 L2 14 Z" fill="none" stroke="#b4b4b4" stroke-width="3"/></svg>
<div class="t" style="left:2536.2px;top:1766px;font-size:34.88px;color:#b8b8b8;letter-spacing:-0.63px;">Rounding</div>
<div class="t" style="left:2754.4px;top:1766px;font-size:34.88px;color:#dadada;letter-spacing:-1.32px;">150 cm</div>
<div style="position:absolute;left:2694px;top:1846px;width:229px;height:56px;background:#181818;border-radius:10px"></div>
<svg style="position:absolute;left:2479.0px;top:1860.0px;" width="28" height="28" viewBox="0 0 28 28"><path d="M14 2 L26 14 L14 26 L2 14 Z" fill="none" stroke="#b4b4b4" stroke-width="3"/></svg>
<div class="t" style="left:2538.3px;top:1857px;font-size:34.88px;color:#b8b8b8;letter-spacing:-0.10px;">Tilt</div>
<div class="t" style="left:2786.7px;top:1857px;font-size:34.88px;color:#dadada;letter-spacing:-0.85px;">0 °</div>
<div style="position:absolute;left:2694px;top:1913px;width:229px;height:56px;background:#181818;border-radius:10px"></div>
<svg style="position:absolute;left:2479.0px;top:1927.0px;" width="28" height="28" viewBox="0 0 28 28"><path d="M14 2 L26 14 L14 26 L2 14 Z" fill="none" stroke="#b4b4b4" stroke-width="3"/></svg>
<div class="t" style="left:2536.2px;top:1925px;font-size:34.88px;color:#b8b8b8;letter-spacing:0.20px;">Drop</div>
<div class="t" style="left:2771.7px;top:1925px;font-size:34.88px;color:#dadada;letter-spacing:-1.03px;">0 cm</div>
<div style="position:absolute;left:2694px;top:1976px;width:229px;height:56px;background:#181818;border-radius:10px"></div>
<svg style="position:absolute;left:2479.0px;top:1990.0px;" width="28" height="28" viewBox="0 0 28 28"><path d="M14 2 L26 14 L14 26 L2 14 Z" fill="none" stroke="#b4b4b4" stroke-width="3"/></svg>
<div class="t" style="left:2537.4px;top:1988px;font-size:34.88px;color:#b8b8b8;letter-spacing:-1.07px;">Overhang</div>
<div class="t" style="left:2771.7px;top:1988px;font-size:34.88px;color:#dadada;letter-spacing:-1.03px;">0 cm</div>
<div style="position:absolute;left:2466.0px;top:1827.0px;width:1334.0px;height:2.0px;background:#333333;"></div>
<div style="position:absolute;left:2466.0px;top:2049.0px;width:1334.0px;height:2.0px;background:#1c1c1c;"></div>
<div style="position:absolute;left:2934px;top:1777px;width:842px;height:10px;background:#1a1a1a;border-radius:5px"></div>
<div style="position:absolute;left:2934px;top:1777px;width:626px;height:10px;background:#5d60b0;border-radius:5px"></div>
<div style="position:absolute;left:3545px;top:1768px;width:29px;height:29px;background:#6467bb;border-radius:15px"></div>
<div style="position:absolute;left:2934px;top:1869px;width:842px;height:10px;background:#1a1a1a;border-radius:5px"></div>
<div style="position:absolute;left:2932px;top:1859px;width:30px;height:30px;background:#6467bb;border-radius:15px"></div>
<div style="position:absolute;left:3797.0px;top:1414.0px;width:10.0px;height:546.0px;background:#3c3c3c;border-radius:5px"></div>
<svg style="position:absolute;left:2500.0px;top:2078.0px;" width="22" height="14" viewBox="0 0 22 14"><path d="M2 2 L11 11 L20 2" fill="none" stroke="#d0d0d0" stroke-width="3.5"/></svg>
<div class="t" style="left:2539.1px;top:2071px;font-size:32.70px;color:#e0e0e0;letter-spacing:-1.96px;font-weight:bold;">SUBDIVISION</div>
<svg style="position:absolute;left:2503.0px;top:2148.0px;" width="30" height="30" viewBox="0 0 30 30"><path d="M15 2 L28 15 L15 28 L2 15 Z" fill="none" stroke="#b4b4b4" stroke-width="3"/></svg>
<div class="t" style="left:2567.0px;top:2139px;font-size:34.88px;color:#b8b8b8;letter-spacing:-1.20px;">Angle</div>
<div style="position:absolute;left:2676px;top:2128px;width:230px;height:56px;background:#181818;border-radius:10px"></div>
<div class="t" style="left:2761.4px;top:2139px;font-size:34.88px;color:#dadada;letter-spacing:-1.27px;">15 °</div>
<svg style="position:absolute;left:0.0px;top:0.0px;" width="3840" height="1300" viewBox="0 0 3840 1300"><g stroke="#b0b0b0" stroke-width="4" fill="none" stroke-linecap="round" stroke-linejoin="round"><circle cx="3627" cy="352" r="13"/><path d="M3637 362 L3650 376"/><path d="M3673 376 V356 L3686 343 L3699 356 V376 H3692 V364 H3680 V376 Z"/><path d="M3729 344 H3761 M3735 356 H3755 M3741 368 H3749"/><path d="M3808 340 H3829 V361 M3829 340 L3807 362 M3820 376 H3791 V347"/><path d="M3371 1231 H3408 M3386 1216 L3371 1231 L3386 1246"/><path d="M3432 1231 H3469 M3454 1216 L3469 1231 L3454 1246" stroke="#5a5a5a"/><path d="M3510 1213 V1250 M3495 1228 L3510 1213 L3525 1228"/><circle cx="3566" cy="1227" r="13"/><path d="M3576 1237 L3590 1250"/><path d="M3610 1217 H3652 M3618 1230 H3644 M3626 1243 H3636"/><rect x="3673" y="1228" width="33" height="23" rx="3"/><path d="M3680 1228 V1221 A9.5 9.5 0 0 1 3699 1221 V1228"/><circle cx="3748" cy="1231" r="19"/><circle cx="3748" cy="1231" r="7"/><path d="M3809 1212 H3829 V1232 M3829 1212 L3807 1234 M3820 1250 H3791 V1220"/></g><path d="M3690 1240 V1243" stroke="#b0b0b0" stroke-width="4"/></svg>
<div style="position:absolute;left:2.0px;top:1965.0px;width:114.0px;height:195.0px;background:#2b2b2b;"></div>
<div style="position:absolute;left:116.0px;top:1956.0px;width:2215.0px;height:204.0px;background:#2b2b2b;"></div>
<svg style="position:absolute;left:128.0px;top:1964.0px;" width="2200" height="14" viewBox="0 0 2200 14"><defs><pattern id="dotp" x="0" y="0" width="9.62" height="10" patternUnits="userSpaceOnUse"><rect width="2.5" height="2.5" fill="#4a4a4a"/></pattern></defs><rect width="2200" height="14" fill="url(#dotp)"/></svg>
<svg style="position:absolute;left:115.0px;top:1999.0px;" width="14" height="60" viewBox="0 0 14 60"><rect x="0.0" y="0.0" width="2.5" height="2.5" fill="#4e4e4e"/><rect x="9.5" y="0.0" width="2.5" height="2.5" fill="#4e4e4e"/><rect x="0.0" y="10.5" width="2.5" height="2.5" fill="#4e4e4e"/><rect x="9.5" y="10.5" width="2.5" height="2.5" fill="#4e4e4e"/><rect x="0.0" y="21.0" width="2.5" height="2.5" fill="#4e4e4e"/><rect x="9.5" y="21.0" width="2.5" height="2.5" fill="#4e4e4e"/><rect x="0.0" y="31.5" width="2.5" height="2.5" fill="#4e4e4e"/><rect x="9.5" y="31.5" width="2.5" height="2.5" fill="#4e4e4e"/><rect x="0.0" y="42.0" width="2.5" height="2.5" fill="#4e4e4e"/><rect x="9.5" y="42.0" width="2.5" height="2.5" fill="#4e4e4e"/><rect x="0.0" y="52.5" width="2.5" height="2.5" fill="#4e4e4e"/><rect x="9.5" y="52.5" width="2.5" height="2.5" fill="#4e4e4e"/></svg>
<svg style="position:absolute;left:115.0px;top:2087.0px;" width="14" height="73" viewBox="0 0 14 73"><rect x="0.0" y="0" width="2.5" height="2.5" fill="#4e4e4e"/><rect x="9.5" y="0" width="2.5" height="2.5" fill="#4e4e4e"/><rect x="0.0" y="9" width="2.5" height="2.5" fill="#4e4e4e"/><rect x="9.5" y="9" width="2.5" height="2.5" fill="#4e4e4e"/><rect x="0.0" y="18" width="2.5" height="2.5" fill="#4e4e4e"/><rect x="9.5" y="18" width="2.5" height="2.5" fill="#4e4e4e"/><rect x="0.0" y="27" width="2.5" height="2.5" fill="#4e4e4e"/><rect x="9.5" y="27" width="2.5" height="2.5" fill="#4e4e4e"/><rect x="0.0" y="36" width="2.5" height="2.5" fill="#4e4e4e"/><rect x="9.5" y="36" width="2.5" height="2.5" fill="#4e4e4e"/><rect x="0.0" y="45" width="2.5" height="2.5" fill="#4e4e4e"/><rect x="9.5" y="45" width="2.5" height="2.5" fill="#4e4e4e"/><rect x="0.0" y="54" width="2.5" height="2.5" fill="#4e4e4e"/><rect x="9.5" y="54" width="2.5" height="2.5" fill="#4e4e4e"/><rect x="0.0" y="63" width="2.5" height="2.5" fill="#4e4e4e"/><rect x="9.5" y="63" width="2.5" height="2.5" fill="#4e4e4e"/></svg>
<div style="position:absolute;left:138px;top:1987px;width:82px;height:80px;background:#3b3b3b;border-radius:9px"></div>
<div style="position:absolute;left:253px;top:1987px;width:585px;height:80px;background:#3b3b3b;border-radius:9px"></div>
<div style="position:absolute;left:874px;top:1987px;width:246px;height:80px;background:#3b3b3b;border-radius:9px"></div>
<div style="position:absolute;left:1411px;top:1987px;width:250px;height:80px;background:#3b3b3b;border-radius:9px"></div>
<div style="position:absolute;left:1693px;top:1987px;width:416px;height:80px;background:#3b3b3b;border-radius:9px"></div>
<div style="position:absolute;left:2174px;top:1987px;width:157px;height:80px;background:#3b3b3b;border-radius:9px"></div>
<div style="position:absolute;left:333.0px;top:1987.0px;width:2.0px;height:80.0px;background:#323232;"></div>
<div style="position:absolute;left:417.0px;top:1987.0px;width:2.0px;height:80.0px;background:#323232;"></div>
<div style="position:absolute;left:501.0px;top:1987.0px;width:2.0px;height:80.0px;background:#323232;"></div>
<div style="position:absolute;left:585.0px;top:1987.0px;width:2.0px;height:80.0px;background:#323232;"></div>
<div style="position:absolute;left:669.0px;top:1987.0px;width:2.0px;height:80.0px;background:#323232;"></div>
<div style="position:absolute;left:754.0px;top:1987.0px;width:2.0px;height:80.0px;background:#323232;"></div>
<div style="position:absolute;left:951.0px;top:1987.0px;width:2.0px;height:80.0px;background:#323232;"></div>
<div style="position:absolute;left:1035.0px;top:1987.0px;width:2.0px;height:80.0px;background:#323232;"></div>
<div style="position:absolute;left:1492.0px;top:1987.0px;width:2.0px;height:80.0px;background:#323232;"></div>
<div style="position:absolute;left:1575.0px;top:1987.0px;width:2.0px;height:80.0px;background:#323232;"></div>
<div style="position:absolute;left:1773.0px;top:1987.0px;width:2.0px;height:80.0px;background:#323232;"></div>
<div style="position:absolute;left:1858.0px;top:1987.0px;width:2.0px;height:80.0px;background:#323232;"></div>
<div style="position:absolute;left:1942.0px;top:1987.0px;width:2.0px;height:80.0px;background:#323232;"></div>
<div style="position:absolute;left:2255.0px;top:1987.0px;width:2.0px;height:80.0px;background:#323232;"></div>
<div style="position:absolute;left:874.0px;top:1990.0px;width:77.0px;height:76.0px;background:#5457a6;border-radius:8px 0 0 0"></div>
<div style="position:absolute;left:952.0px;top:1990.0px;width:83.0px;height:76.0px;background:#5457a6;"></div>
<div style="position:absolute;left:2027.0px;top:1990.0px;width:82.0px;height:76.0px;background:#5457a6;"></div>
<svg style="position:absolute;left:937.0px;top:2052.0px;" width="14" height="14" viewBox="0 0 14 14"><path d="M14 0 V14 H0 Z" fill="#a8a8b8"/></svg>
<svg style="position:absolute;left:1021.0px;top:2052.0px;" width="14" height="14" viewBox="0 0 14 14"><path d="M14 0 V14 H0 Z" fill="#a8a8b8"/></svg>
<svg style="position:absolute;left:1492.0px;top:2052.0px;" width="14" height="14" viewBox="0 0 14 14"><path d="M14 0 V14 H0 Z" fill="#a8a8b8"/></svg>
<svg style="position:absolute;left:0.0px;top:0.0px;" width="2331" height="2160" viewBox="0 0 2331 2160"><g stroke="#c0c0c0" stroke-width="4.5" fill="none" stroke-linejoin="miter"><path d="M179 2002 L203 2026 L179 2050 L155 2026 Z" stroke-width="6"/><path d="M275 2008 V2044"/><path d="M312 2008 V2044 L290 2026 Z"/><path d="M404 2008 V2044 L382 2026 Z"/><path d="M466 2008 V2044 L444 2026 Z"/><path d="M477 2008 V2044"/><path d="M528 2003 V2050 L564 2026 Z"/><path d="M613 2008 V2044"/><path d="M625 2008 V2044 L647 2026 Z"/><path d="M687 2008 V2044 L709 2026 Z"/><path d="M780 2008 V2044 L802 2026 Z"/><path d="M815 2008 V2044"/></g><path d="M361 2013 L374 2026 L361 2039 L348 2026 Z" fill="#c0c0c0"/><path d="M727 2013 L740 2026 L727 2039 L714 2026 Z" fill="#c0c0c0"/><g stroke="#d8d8e8" stroke-width="4.5" fill="none"><path d="M893 2028 V2014 H930 M922 2006 L932 2014 L922 2022"/><path d="M929 2024 V2038 H892 M900 2030 L890 2038 L900 2046"/></g><path d="M985 2024 L996 2000 L1007 2024 M989 2016 H1003" stroke="#d8d8e8" stroke-width="3" fill="none"/><g fill="#d8d8e8"><rect x="968" y="2032" width="5" height="14"/><rect x="980" y="2032" width="5" height="14"/><rect x="992" y="2032" width="5" height="14"/><rect x="1004" y="2034" width="18" height="12"/></g><path d="M1054 2018 H1062 L1076 2006 V2046 L1062 2034 H1054 Z" fill="none" stroke="#c0c0c0" stroke-width="4"/><path d="M1084 2014 A16 16 0 0 1 1084 2038 M1090 2004 A26 26 0 0 1 1090 2048" stroke="#c0c0c0" stroke-width="4" fill="none"/><circle cx="1452" cy="2026" r="26" fill="none" stroke="#e06a66" stroke-width="4"/><path d="M1452 2014 L1464 2026 L1452 2038 L1440 2026 Z" fill="#c0c0c0"/><circle cx="1537" cy="2026" r="26" fill="none" stroke="#e06a66" stroke-width="4"/><path d="M1526 2040 L1537 2011 L1548 2040 M1530 2030 H1544" stroke="#c0c0c0" stroke-width="3.5" fill="none"/><circle cx="1620" cy="2026" r="26" fill="none" stroke="#c0c0c0" stroke-width="4"/><path d="M1634.9 2027.5 L1634.4 2030.4 L1628.8 2030.7 L1627.7 2032.3 L1629.5 2037.6 L1627.1 2039.2 L1622.9 2035.6 L1621.0 2036.0 L1618.5 2040.9 L1615.6 2040.4 L1615.3 2034.8 L1613.7 2033.7 L1608.4 2035.5 L1606.8 2033.1 L1610.4 2028.9 L1610.0 2027.0 L1605.1 2024.5 L1605.6 2021.6 L1611.2 2021.3 L1612.3 2019.7 L1610.5 2014.4 L1612.9 2012.8 L1617.1 2016.4 L1619.0 2016.0 L1621.5 2011.1 L1624.4 2011.6 L1624.7 2017.2 L1626.3 2018.3 L1631.6 2016.5 L1633.2 2018.9 L1629.6 2023.1 L1630.0 2025.0 Z" fill="#c0c0c0"/><circle cx="1620" cy="2026" r="4.5" fill="#3b3b3b"/><path d="M1733 2012 L1747 2026 L1733 2040 L1719 2026 Z" fill="#c0c0c0"/><g stroke="#c0c0c0" stroke-width="4" fill="none"><path d="M1725 2007 L1733 1999 L1741 2007 M1725 2045 L1733 2053 L1741 2045 M1714 2018 L1706 2026 L1714 2034 M1752 2018 L1760 2026 L1752 2034"/></g><path d="M1818 2014 L1830 2026 L1818 2038 L1806 2026 Z" fill="#c0c0c0"/><g stroke="#c0c0c0" stroke-width="4" fill="none"><path d="M1830 2004 A24 24 0 0 1 1838 2042"/><path d="M1806 2048 A24 24 0 0 1 1798 2010"/><path d="M1826 1996 L1834 2004 L1826 2012"/><path d="M1798 2036 L1799 2048 L1810 2050"/></g><path d="M1888 2004 H1927 V2048 H1906" stroke="#c0c0c0" stroke-width="4" fill="none"/><path d="M1890 2028 L1903 2041 L1890 2054 L1877 2041 Z" fill="#c0c0c0"/><rect x="1962" y="2006" width="48" height="17" rx="8.5" fill="#c0c0c0"/><rect x="1962" y="2030" width="48" height="17" rx="8.5" fill="#c0c0c0"/><circle cx="1972" cy="2014.5" r="4.5" fill="#3b3b3b"/><circle cx="2000" cy="2038.5" r="4.5" fill="#3b3b3b"/><circle cx="2054" cy="2041" r="9" fill="#c0c0c0"/><circle cx="2074" cy="2015" r="9" fill="#c0c0c0"/><path d="M2080 2036 Q2085 2048 2092 2046" stroke="#c0c0c0" stroke-width="6" fill="none"/><path d="M2047 2001 L2092 2051" stroke="#d8d8e8" stroke-width="4"/><circle cx="2214" cy="2026" r="27" fill="none" stroke="#c0c0c0" stroke-width="4"/><rect x="2202" y="2009" width="24" height="34" rx="12" fill="#c0c0c0"/><path d="M2214 2009 V2023 M2202 2023 H2226" stroke="#3b3b3b" stroke-width="2.5"/><path d="M2281 2046 A26 26 0 0 1 2298 2000 M2316 2012 A26 26 0 0 1 2318 2044" stroke="#c0c0c0" stroke-width="4" fill="none"/><path d="M2300 2020 L2314 2030 L2300 2044 L2286 2032 Z" fill="#c0c0c0"/><path d="M2306 2026 L2322 2004" stroke="#c0c0c0" stroke-width="5"/></svg>
<div style="position:absolute;left:1151px;top:1997px;width:227px;height:56px;background:#181818;border-radius:10px"></div>
<div class="t" style="left:1210.5px;top:2009px;font-size:34.88px;color:#dcdcdc;letter-spacing:-2.25px;">87.50 F</div>
<div style="position:absolute;left:138.0px;top:2125.0px;width:2193.0px;height:2.0px;background:#323232;"></div>
<svg style="position:absolute;left:136.0px;top:2131.0px;" width="2200" height="12" viewBox="0 0 2200 12"><rect x="15.0" y="0" width="3.5" height="10" fill="#c4c4c4"/><rect x="39.4" y="1" width="3.5" height="7" fill="#c4c4c4"/><rect x="63.9" y="1" width="3.5" height="7" fill="#c4c4c4"/><rect x="88.3" y="1" width="3.5" height="7" fill="#c4c4c4"/><rect x="112.8" y="1" width="3.5" height="7" fill="#c4c4c4"/><rect x="137.2" y="0" width="3.5" height="10" fill="#c4c4c4"/><rect x="161.7" y="1" width="3.5" height="7" fill="#c4c4c4"/><rect x="186.1" y="1" width="3.5" height="7" fill="#c4c4c4"/><rect x="210.6" y="1" width="3.5" height="7" fill="#c4c4c4"/><rect x="235.0" y="1" width="3.5" height="7" fill="#c4c4c4"/><rect x="259.5" y="0" width="3.5" height="10" fill="#c4c4c4"/><rect x="283.9" y="1" width="3.5" height="7" fill="#c4c4c4"/><rect x="308.4" y="1" width="3.5" height="7" fill="#c4c4c4"/><rect x="332.8" y="1" width="3.5" height="7" fill="#c4c4c4"/><rect x="357.3" y="1" width="3.5" height="7" fill="#c4c4c4"/><rect x="381.8" y="0" width="3.5" height="10" fill="#c4c4c4"/><rect x="406.2" y="1" width="3.5" height="7" fill="#c4c4c4"/><rect x="430.6" y="1" width="3.5" height="7" fill="#c4c4c4"/><rect x="455.1" y="1" width="3.5" height="7" fill="#c4c4c4"/><rect x="479.5" y="1" width="3.5" height="7" fill="#c4c4c4"/><rect x="504.0" y="0" width="3.5" height="10" fill="#c4c4c4"/><rect x="528.4" y="1" width="3.5" height="7" fill="#c4c4c4"/><rect x="552.9" y="1" width="3.5" height="7" fill="#c4c4c4"/><rect x="577.4" y="1" width="3.5" height="7" fill="#c4c4c4"/><rect x="601.8" y="1" width="3.5" height="7" fill="#c4c4c4"/><rect x="626.2" y="0" width="3.5" height="10" fill="#c4c4c4"/><rect x="650.7" y="1" width="3.5" height="7" fill="#c4c4c4"/><rect x="675.1" y="1" width="3.5" height="7" fill="#c4c4c4"/><rect x="699.6" y="1" width="3.5" height="7" fill="#c4c4c4"/><rect x="724.0" y="1" width="3.5" height="7" fill="#c4c4c4"/><rect x="748.5" y="0" width="3.5" height="10" fill="#c4c4c4"/><rect x="772.9" y="1" width="3.5" height="7" fill="#c4c4c4"/><rect x="797.4" y="1" width="3.5" height="7" fill="#c4c4c4"/><rect x="821.9" y="1" width="3.5" height="7" fill="#c4c4c4"/><rect x="846.3" y="1" width="3.5" height="7" fill="#c4c4c4"/><rect x="870.8" y="0" width="3.5" height="10" fill="#c4c4c4"/><rect x="895.2" y="1" width="3.5" height="7" fill="#c4c4c4"/><rect x="919.7" y="1" width="3.5" height="7" fill="#c4c4c4"/><rect x="944.1" y="1" width="3.5" height="7" fill="#c4c4c4"/><rect x="968.5" y="1" width="3.5" height="7" fill="#c4c4c4"/><rect x="993.0" y="0" width="3.5" height="10" fill="#c4c4c4"/><rect x="1017.4" y="1" width="3.5" height="7" fill="#c4c4c4"/><rect x="1041.9" y="1" width="3.5" height="7" fill="#c4c4c4"/><rect x="1066.3" y="1" width="3.5" height="7" fill="#c4c4c4"/><rect x="1090.8" y="1" width="3.5" height="7" fill="#c4c4c4"/><rect x="1115.2" y="0" width="3.5" height="10" fill="#c4c4c4"/><rect x="1139.7" y="1" width="3.5" height="7" fill="#c4c4c4"/><rect x="1164.1" y="1" width="3.5" height="7" fill="#c4c4c4"/><rect x="1188.6" y="1" width="3.5" height="7" fill="#c4c4c4"/><rect x="1213.0" y="1" width="3.5" height="7" fill="#c4c4c4"/><rect x="1237.5" y="0" width="3.5" height="10" fill="#c4c4c4"/><rect x="1262.0" y="1" width="3.5" height="7" fill="#c4c4c4"/><rect x="1286.4" y="1" width="3.5" height="7" fill="#c4c4c4"/><rect x="1310.8" y="1" width="3.5" height="7" fill="#c4c4c4"/><rect x="1335.3" y="1" width="3.5" height="7" fill="#c4c4c4"/><rect x="1359.8" y="0" width="3.5" height="10" fill="#c4c4c4"/><rect x="1384.2" y="1" width="3.5" height="7" fill="#c4c4c4"/><rect x="1408.6" y="1" width="3.5" height="7" fill="#c4c4c4"/><rect x="1433.1" y="1" width="3.5" height="7" fill="#c4c4c4"/><rect x="1457.5" y="1" width="3.5" height="7" fill="#c4c4c4"/><rect x="1482.0" y="0" width="3.5" height="10" fill="#c4c4c4"/><rect x="1506.5" y="1" width="3.5" height="7" fill="#c4c4c4"/><rect x="1530.9" y="1" width="3.5" height="7" fill="#c4c4c4"/><rect x="1555.3" y="1" width="3.5" height="7" fill="#c4c4c4"/><rect x="1579.8" y="1" width="3.5" height="7" fill="#c4c4c4"/><rect x="1604.2" y="0" width="3.5" height="10" fill="#c4c4c4"/><rect x="1628.7" y="1" width="3.5" height="7" fill="#c4c4c4"/><rect x="1653.1" y="1" width="3.5" height="7" fill="#c4c4c4"/><rect x="1677.6" y="1" width="3.5" height="7" fill="#c4c4c4"/><rect x="1702.0" y="1" width="3.5" height="7" fill="#c4c4c4"/><rect x="1726.5" y="0" width="3.5" height="10" fill="#c4c4c4"/><rect x="1751.0" y="1" width="3.5" height="7" fill="#c4c4c4"/><rect x="1775.4" y="1" width="3.5" height="7" fill="#c4c4c4"/><rect x="1799.8" y="1" width="3.5" height="7" fill="#c4c4c4"/><rect x="1824.3" y="1" width="3.5" height="7" fill="#c4c4c4"/><rect x="1848.8" y="0" width="3.5" height="10" fill="#c4c4c4"/><rect x="1873.2" y="1" width="3.5" height="7" fill="#c4c4c4"/><rect x="1897.6" y="1" width="3.5" height="7" fill="#c4c4c4"/><rect x="1922.1" y="1" width="3.5" height="7" fill="#c4c4c4"/><rect x="1946.6" y="1" width="3.5" height="7" fill="#c4c4c4"/><rect x="1971.0" y="0" width="3.5" height="10" fill="#c4c4c4"/><rect x="1995.4" y="1" width="3.5" height="7" fill="#c4c4c4"/><rect x="2019.9" y="1" width="3.5" height="7" fill="#c4c4c4"/><rect x="2044.3" y="1" width="3.5" height="7" fill="#c4c4c4"/><rect x="2068.8" y="1" width="3.5" height="7" fill="#c4c4c4"/><rect x="2093.2" y="0" width="3.5" height="10" fill="#c4c4c4"/><rect x="2117.7" y="1" width="3.5" height="7" fill="#c4c4c4"/><rect x="2142.2" y="1" width="3.5" height="7" fill="#c4c4c4"/><rect x="2166.6" y="1" width="3.5" height="7" fill="#c4c4c4"/></svg>
<div class="t" style="left:139.2px;top:2079px;font-size:33.43px;color:#b8b8b8;letter-spacing:0.00px;">0</div>
<div class="t" style="left:261.5px;top:2079px;font-size:33.43px;color:#b8b8b8;letter-spacing:0.00px;">5</div>
<div class="t" style="left:373.8px;top:2079px;font-size:33.43px;color:#b8b8b8;letter-spacing:0.00px;">10</div>
<div class="t" style="left:496.1px;top:2079px;font-size:33.43px;color:#b8b8b8;letter-spacing:0.00px;">15</div>
<div class="t" style="left:618.8px;top:2079px;font-size:33.43px;color:#b8b8b8;letter-spacing:0.00px;">20</div>
<div class="t" style="left:741.0px;top:2079px;font-size:33.43px;color:#b8b8b8;letter-spacing:0.00px;">25</div>
<div class="t" style="left:863.4px;top:2079px;font-size:33.43px;color:#b8b8b8;letter-spacing:0.00px;">30</div>
<div class="t" style="left:985.8px;top:2079px;font-size:33.43px;color:#b8b8b8;letter-spacing:0.00px;">35</div>
<div class="t" style="left:1108.2px;top:2079px;font-size:33.43px;color:#b8b8b8;letter-spacing:0.00px;">40</div>
<div class="t" style="left:1230.5px;top:2079px;font-size:33.43px;color:#b8b8b8;letter-spacing:0.00px;">45</div>
<div class="t" style="left:1352.4px;top:2079px;font-size:33.43px;color:#b8b8b8;letter-spacing:0.00px;">50</div>
<div class="t" style="left:1474.7px;top:2079px;font-size:33.43px;color:#b8b8b8;letter-spacing:0.00px;">55</div>
<div class="t" style="left:1596.8px;top:2079px;font-size:33.43px;color:#b8b8b8;letter-spacing:0.00px;">60</div>
<div class="t" style="left:1719.1px;top:2079px;font-size:33.43px;color:#b8b8b8;letter-spacing:0.00px;">65</div>
<div class="t" style="left:1841.2px;top:2079px;font-size:33.43px;color:#b8b8b8;letter-spacing:0.00px;">70</div>
<div class="t" style="left:1963.5px;top:2079px;font-size:33.43px;color:#b8b8b8;letter-spacing:0.00px;">75</div>
<div class="t" style="left:2085.8px;top:2079px;font-size:33.43px;color:#b8b8b8;letter-spacing:0.00px;">80</div>
<div class="t" style="left:2208.2px;top:2079px;font-size:33.43px;color:#b8b8b8;letter-spacing:0.00px;">85</div>
<div style="position:absolute;left:151.0px;top:2074.0px;width:3.0px;height:68.0px;background:#c8c8c8;"></div>
<div style="position:absolute;left:884.5px;top:2074.0px;width:3.0px;height:68.0px;background:#c8c8c8;"></div>
<div style="position:absolute;left:1618.0px;top:2074.0px;width:3.0px;height:68.0px;background:#c8c8c8;"></div>
<div style="position:absolute;left:2261.0px;top:2074.0px;width:28.0px;height:49.0px;background:#6b6dbd;"></div>
<div style="position:absolute;left:2273.0px;top:2120.0px;width:4.0px;height:21.0px;background:#c8c8c8;"></div>
<div class="t" style="left:2291.6px;top:2079px;font-size:33.43px;color:#7a7cc8;letter-spacing:-2.10px;">87</div>
<div style="position:absolute;left:138px;top:2145px;width:226px;height:30px;background:#1c1c1c;border-radius:10px"></div>
<div style="position:absolute;left:382px;top:2145px;width:1706px;height:30px;background:#3b3b3b;border-radius:10px"></div>
<div style="position:absolute;left:2105px;top:2145px;width:226px;height:30px;background:#1c1c1c;border-radius:10px"></div>
</body></html>
